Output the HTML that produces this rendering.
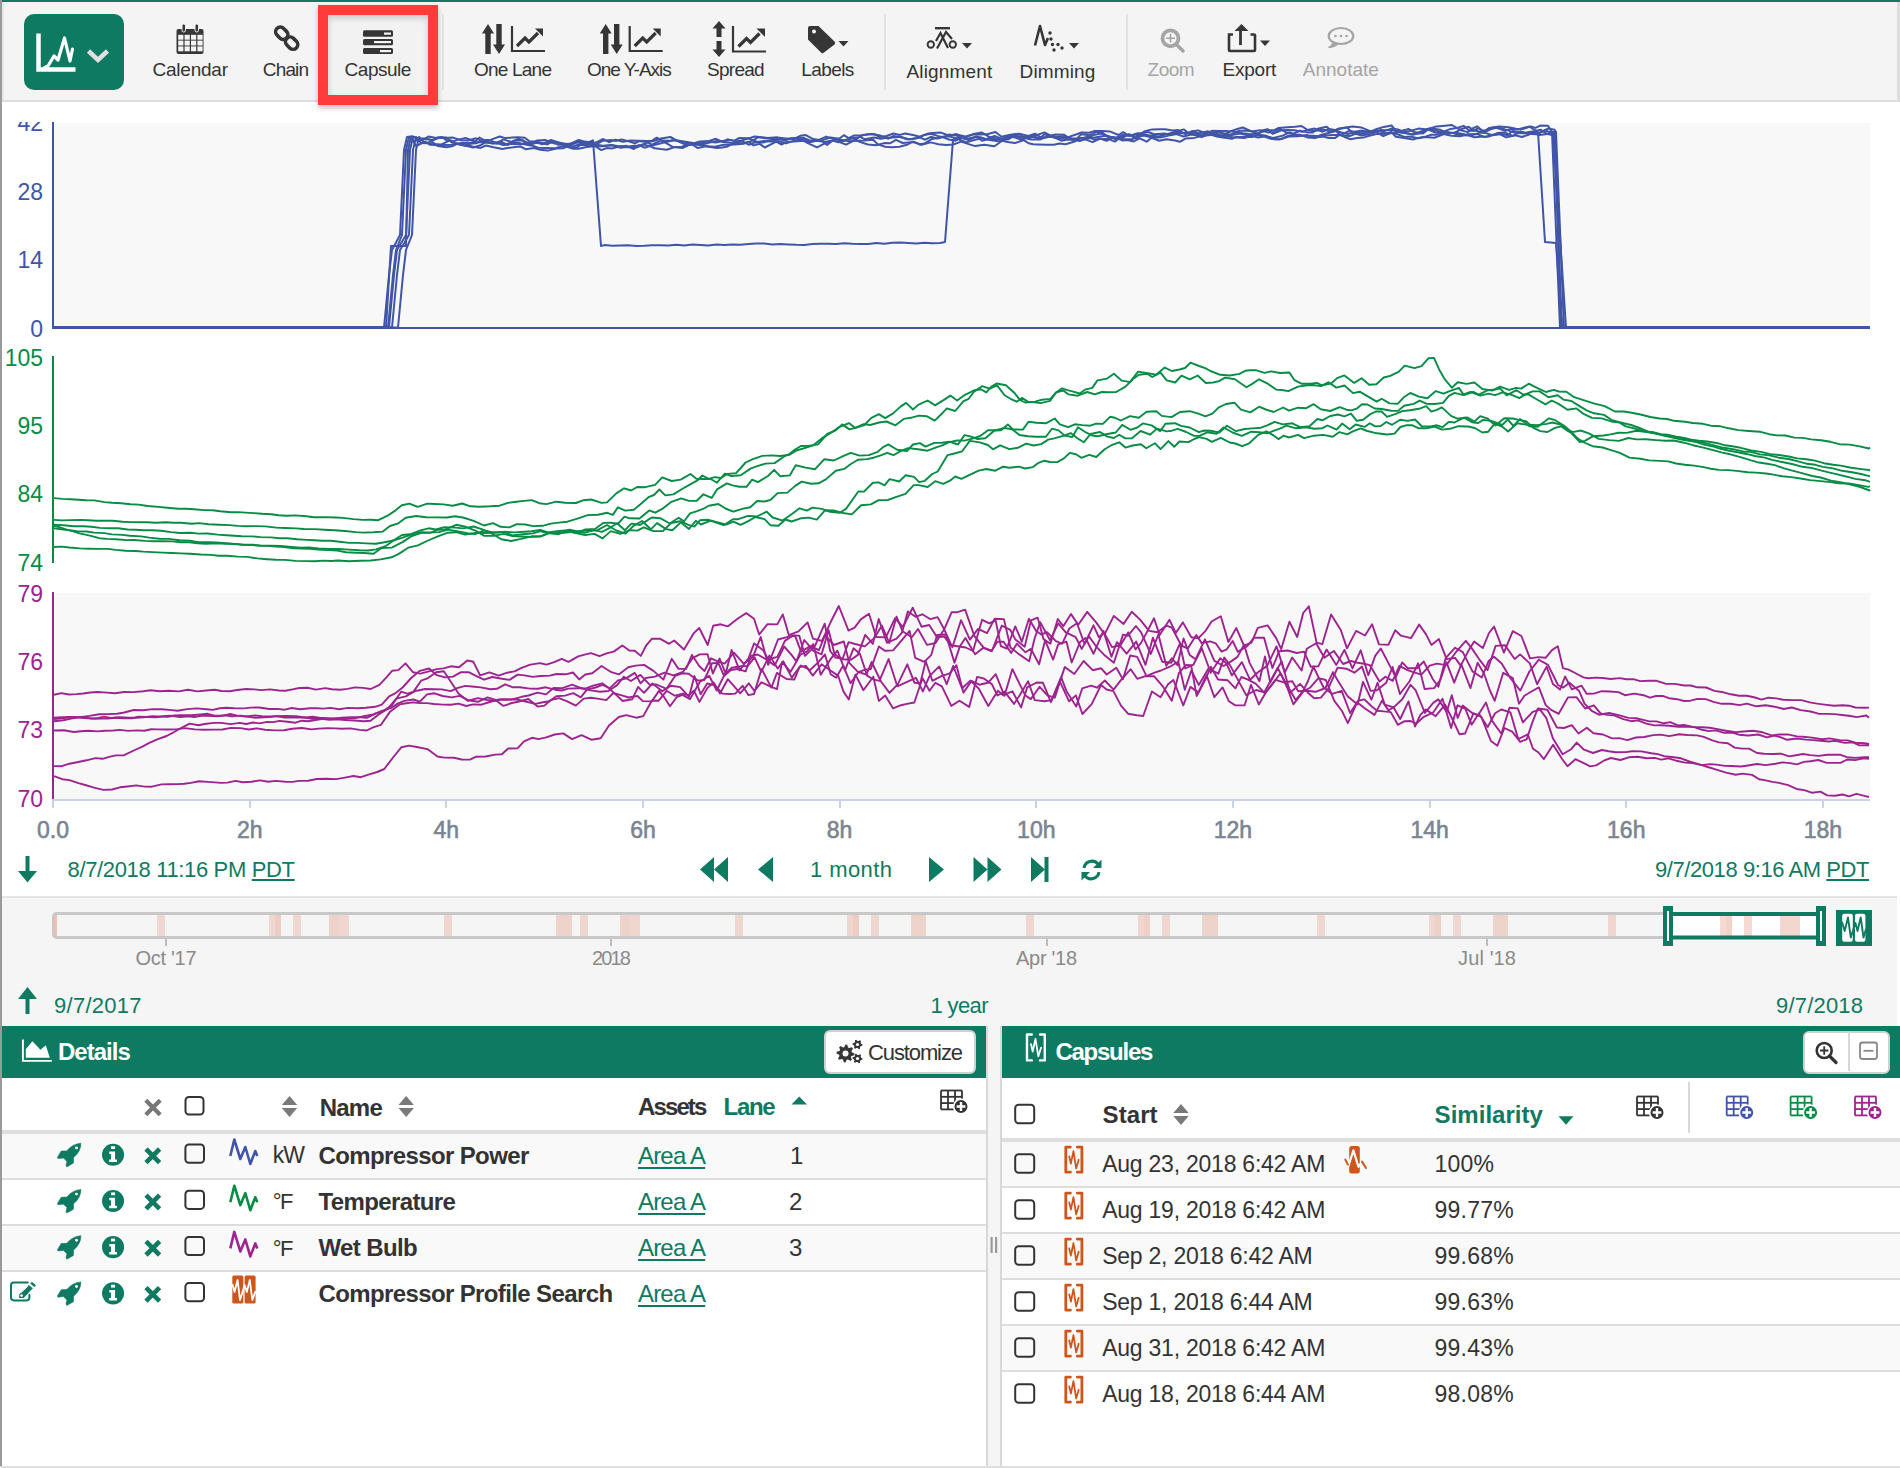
<!DOCTYPE html><html><head><meta charset="utf-8"><style>

*{margin:0;padding:0;box-sizing:content-box}
html,body{width:1900px;height:1468px;overflow:hidden;background:#fff}
body{position:relative;font-family:"Liberation Sans",sans-serif}
.t{position:absolute;white-space:nowrap;z-index:4}
.r{position:absolute}
svg.ov{position:absolute;left:0;top:0;z-index:2}

</style></head><body>
<div class="r" style="left:0px;top:0px;width:1900px;height:1468px;background:#ffffff;"></div>
<div class="r" style="left:0px;top:2px;width:1900px;height:98px;background:#f4f4f4;"></div>
<div class="r" style="left:0px;top:100px;width:1900px;height:2px;background:#dddddd;"></div>
<div class="r" style="left:0px;top:0px;width:1900px;height:2px;background:#0f7a62;"></div>
<div class="r" style="left:0px;top:0px;width:2px;height:1468px;background:#9a9a9a;"></div>
<div class="r" style="left:2px;top:2px;width:2px;height:98px;background:#e6e6e6;"></div>
<div class="r" style="left:1897px;top:2px;width:3px;height:98px;background:#dddddd;"></div>
<div class="r" style="left:24px;top:14px;width:100px;height:76px;background:#0f7a62;border-radius:10px;"></div>
<div class="r" style="left:328px;top:15px;width:100px;height:80px;background:#f2f2f2;box-shadow: inset 0 3px 6px rgba(0,0,0,0.18);"></div>
<div class="r" style="left:318px;top:5px;width:100px;height:80px;border:10px solid #ff3b3b;box-shadow:0 3px 5px rgba(0,0,0,0.25);"></div>
<div class="r" style="left:442px;top:14px;width:2px;height:76px;background:#e2e2e2;"></div>
<div class="r" style="left:884px;top:14px;width:2px;height:76px;background:#e2e2e2;"></div>
<div class="r" style="left:1126px;top:14px;width:2px;height:76px;background:#e2e2e2;"></div>
<div class="r" style="left:54px;top:123px;width:1816px;height:204px;background:#f8f8f9;"></div>
<div class="r" style="left:54px;top:593px;width:1816px;height:206px;background:#f8f8f9;"></div>
<div class="r" style="left:52px;top:122px;width:2px;height:207px;background:#4055a8;"></div>
<div class="r" style="left:52px;top:327px;width:1818px;height:2px;background:#4055a8;"></div>
<div class="r" style="left:52px;top:356px;width:2px;height:207px;background:#068c45;"></div>
<div class="r" style="left:52px;top:592px;width:2px;height:208px;background:#9d248f;"></div>
<div class="r" style="left:52px;top:799px;width:1818px;height:2px;background:#c9d2e8;"></div>
<div class="r" style="left:52px;top:800px;width:2px;height:8px;background:#c9d2e8;"></div>
<div class="r" style="left:249px;top:800px;width:2px;height:8px;background:#c9d2e8;"></div>
<div class="r" style="left:445px;top:800px;width:2px;height:8px;background:#c9d2e8;"></div>
<div class="r" style="left:642px;top:800px;width:2px;height:8px;background:#c9d2e8;"></div>
<div class="r" style="left:839px;top:800px;width:2px;height:8px;background:#c9d2e8;"></div>
<div class="r" style="left:1035px;top:800px;width:2px;height:8px;background:#c9d2e8;"></div>
<div class="r" style="left:1232px;top:800px;width:2px;height:8px;background:#c9d2e8;"></div>
<div class="r" style="left:1429px;top:800px;width:2px;height:8px;background:#c9d2e8;"></div>
<div class="r" style="left:1625px;top:800px;width:2px;height:8px;background:#c9d2e8;"></div>
<div class="r" style="left:1822px;top:800px;width:2px;height:8px;background:#c9d2e8;"></div>
<div class="r" style="left:2px;top:896px;width:1895px;height:2px;background:#e4e4e4;"></div>
<div class="r" style="left:2px;top:898px;width:1895px;height:128px;background:#f5f5f5;"></div>
<div class="r" style="left:52px;top:912px;width:1620px;height:21px;border:3px solid #c8c8c8;border-right:none;border-radius:5px 0 0 5px;background:#f5f5f5"></div>
<div class="r" style="left:1668px;top:912px;width:152px;height:27px;background:#ffffff;"></div>
<div class="r" style="left:165px;top:939px;width:2px;height:7px;background:#bdbdbd;"></div>
<div class="r" style="left:610px;top:939px;width:2px;height:7px;background:#bdbdbd;"></div>
<div class="r" style="left:1046px;top:939px;width:2px;height:7px;background:#bdbdbd;"></div>
<div class="r" style="left:1486px;top:939px;width:2px;height:7px;background:#bdbdbd;"></div>
<div class="r" style="left:2px;top:1026px;width:984px;height:52px;background:#0f7a62;"></div>
<div class="r" style="left:1002px;top:1026px;width:898px;height:52px;background:#0f7a62;"></div>
<div class="r" style="left:986px;top:1026px;width:2px;height:442px;background:#d8d8d8;"></div>
<div class="r" style="left:988px;top:1026px;width:12px;height:442px;background:#f5f5f5;"></div>
<div class="r" style="left:1000px;top:1026px;width:2px;height:442px;background:#d8d8d8;"></div>
<div class="r" style="left:2px;top:1078px;width:984px;height:387px;background:#ffffff;"></div>
<div class="r" style="left:1002px;top:1078px;width:898px;height:387px;background:#ffffff;"></div>
<div class="r" style="left:0px;top:1466px;width:1900px;height:2px;background:#e0e0e0;"></div>
<div class="r" style="left:824px;top:1030px;width:148px;height:40px;background:#fff;border:2px solid #d0d0d0;border-radius:6px"></div>
<div class="r" style="left:2px;top:1130px;width:984px;height:4px;background:#dddddd;"></div>
<div class="r" style="left:2px;top:1134px;width:984px;height:44px;background:#f9f9f9;"></div>
<div class="r" style="left:2px;top:1178px;width:984px;height:2px;background:#dddddd;"></div>
<div class="r" style="left:2px;top:1180px;width:984px;height:44px;background:#ffffff;"></div>
<div class="r" style="left:2px;top:1224px;width:984px;height:2px;background:#dddddd;"></div>
<div class="r" style="left:2px;top:1226px;width:984px;height:44px;background:#f9f9f9;"></div>
<div class="r" style="left:2px;top:1270px;width:984px;height:2px;background:#dddddd;"></div>
<div class="r" style="left:2px;top:1272px;width:984px;height:46px;background:#ffffff;"></div>
<div class="r" style="left:1803px;top:1030.5px;width:83px;height:39px;background:#fff;border:2px solid #d0d0d0;border-radius:6px"></div>
<div class="r" style="left:1848px;top:1032px;width:2px;height:39px;background:#d8d8d8;"></div>
<div class="r" style="left:1688px;top:1082px;width:2px;height:51px;background:#d8d8d8;"></div>
<div class="r" style="left:1002px;top:1138px;width:898px;height:4px;background:#dddddd;"></div>
<div class="r" style="left:1002px;top:1142px;width:898px;height:44px;background:#f9f9f9;"></div>
<div class="r" style="left:1002px;top:1186px;width:898px;height:2px;background:#dddddd;"></div>
<div class="r" style="left:1002px;top:1188px;width:898px;height:44px;background:#ffffff;"></div>
<div class="r" style="left:1002px;top:1232px;width:898px;height:2px;background:#dddddd;"></div>
<div class="r" style="left:1002px;top:1234px;width:898px;height:44px;background:#f9f9f9;"></div>
<div class="r" style="left:1002px;top:1278px;width:898px;height:2px;background:#dddddd;"></div>
<div class="r" style="left:1002px;top:1280px;width:898px;height:44px;background:#ffffff;"></div>
<div class="r" style="left:1002px;top:1324px;width:898px;height:2px;background:#dddddd;"></div>
<div class="r" style="left:1002px;top:1326px;width:898px;height:44px;background:#f9f9f9;"></div>
<div class="r" style="left:1002px;top:1370px;width:898px;height:2px;background:#dddddd;"></div>
<div class="r" style="left:1002px;top:1372px;width:898px;height:44px;background:#ffffff;"></div>
<svg class="ov" width="1900" height="1468" viewBox="0 0 1900 1468">
<path d="M38.5 33.5 V69.5 H75.5" fill="none" stroke="#fff" stroke-width="4.5"/>
<path d="M44 68 L48 66 L54 56 L58 60 L64.5 38 L70 61 L72.5 49" fill="none" stroke="#fff" stroke-width="3.2" stroke-linejoin="round" stroke-linecap="round"/>
<path d="M88.5 51 L98 60 L107.5 51" fill="none" stroke="#e0e0e0" stroke-width="4.5"/>
<rect x="176.5" y="29" width="27" height="25" rx="2" fill="#363636"/>
<rect x="182" y="24" width="3.5" height="8" rx="1.7" fill="#363636" stroke="#f4f4f4" stroke-width="1"/>
<rect x="195" y="24" width="3.5" height="8" rx="1.7" fill="#363636" stroke="#f4f4f4" stroke-width="1"/>
<rect x="178.2" y="34.8" width="5.2" height="4.9" fill="#f4f4f4"/>
<rect x="184.6" y="34.8" width="5.2" height="4.9" fill="#f4f4f4"/>
<rect x="191" y="34.8" width="5.2" height="4.9" fill="#f4f4f4"/>
<rect x="197.4" y="34.8" width="5.2" height="4.9" fill="#f4f4f4"/>
<rect x="178.2" y="40.6" width="5.2" height="4.9" fill="#f4f4f4"/>
<rect x="184.6" y="40.6" width="5.2" height="4.9" fill="#f4f4f4"/>
<rect x="191" y="40.6" width="5.2" height="4.9" fill="#f4f4f4"/>
<rect x="197.4" y="40.6" width="5.2" height="4.9" fill="#f4f4f4"/>
<rect x="178.2" y="46.4" width="5.2" height="4.9" fill="#f4f4f4"/>
<rect x="184.6" y="46.4" width="5.2" height="4.9" fill="#f4f4f4"/>
<rect x="191" y="46.4" width="5.2" height="4.9" fill="#f4f4f4"/>
<rect x="197.4" y="46.4" width="5.2" height="4.9" fill="#f4f4f4"/>
<g transform="rotate(-45 286.5 38)"><rect x="281.8" y="24.5" width="9.4" height="13.5" rx="4.7" fill="none" stroke="#363636" stroke-width="3.6"/><rect x="281.8" y="38.5" width="9.4" height="13.5" rx="4.7" fill="none" stroke="#363636" stroke-width="3.6"/></g>
<rect x="363" y="30.3" width="30" height="6.5" rx="1.5" fill="#363636"/><rect x="384" y="32.5" width="7" height="2.2" fill="#f4f4f4"/>
<rect x="363" y="39" width="30" height="6.2" rx="1.5" fill="#363636"/><rect x="374" y="41" width="17" height="2.2" fill="#f4f4f4"/>
<rect x="363" y="48" width="30" height="6" rx="1.5" fill="#363636"/><rect x="380" y="50" width="11" height="2.2" fill="#f4f4f4"/>
<path d="M482 33.5 L488 24 L494 33.5 H490.7 V54 H485.3 V33.5 Z" fill="#363636"/>
<path d="M493 44.5 L499 54 L505 44.5 H501.7 V24 H496.3 V44.5 Z" fill="#363636"/>
<path d="M512 26 V51 H545" fill="none" stroke="#363636" stroke-width="2.2"/>
<path d="M517 46 L525 38 L529 42 L538 33" fill="none" stroke="#363636" stroke-width="3.2"/>
<path d="M535 28.5 H543 V36.5 Z" fill="#363636"/>
<path d="M599.7 33.5 L605.7 24 L611.7 33.5 H608.4 V54 H603.0 V33.5 Z" fill="#363636"/>
<path d="M610.7 44.5 L616.7 54 L622.7 44.5 H619.4 V24 H614.0 V44.5 Z" fill="#363636"/>
<path d="M629.7 26 V51 H662.7" fill="none" stroke="#363636" stroke-width="2.2"/>
<path d="M634.7 46 L642.7 38 L646.7 42 L655.7 33" fill="none" stroke="#363636" stroke-width="3.2"/>
<path d="M652.7 28.5 H660.7 V36.5 Z" fill="#363636"/>
<path d="M712.5 28.5 L719 21 L725.5 28.5 H721.5 V37 H716.5 V28.5 Z" fill="#363636"/>
<path d="M712.5 49.5 L719 57 L725.5 49.5 H721.5 V41 H716.5 V49.5 Z" fill="#363636"/>
<path d="M733 26 V51.5 H766" fill="none" stroke="#363636" stroke-width="2.2"/>
<path d="M738.5 46.5 L746.5 38.5 L750.5 42.5 L759.5 33.5" fill="none" stroke="#363636" stroke-width="3.2"/>
<path d="M756.5 28.5 H765 V37 Z" fill="#363636"/>
<path d="M810 26 H818.5 L834.5 41.5 Q836 43 834.5 44.5 L824 52.5 Q822.5 54 821 52.5 L808 39.5 V28 Q808 26 810 26 Z" fill="#363636"/>
<circle cx="814" cy="31.5" r="2" fill="#f4f4f4"/>
<path d="M838.5 41 H848.5 L843.5 46.5 Z" fill="#363636"/>
<rect x="935" y="27" width="15" height="2.4" fill="#363636"/>
<circle cx="930.8" cy="44.5" r="3.2" fill="none" stroke="#363636" stroke-width="1.9"/>
<circle cx="952.8" cy="44.5" r="3.2" fill="none" stroke="#363636" stroke-width="1.9"/>
<path d="M936 41 L940.5 33 L948 48" fill="none" stroke="#363636" stroke-width="2.2"/>
<path d="M937 48.5 L946 32 L952 39" fill="none" stroke="#363636" stroke-width="2.2"/>
<path d="M962 43 H972 L967 48.5 Z" fill="#363636"/>
<path d="M1035 45.5 L1040 26 L1045 45 L1048 38" fill="none" stroke="#363636" stroke-width="2.6" stroke-linejoin="round"/>
<circle cx="1050" cy="33" r="1.7" fill="#363636"/>
<circle cx="1051" cy="39" r="1.7" fill="#363636"/>
<circle cx="1052.5" cy="44.5" r="1.7" fill="#363636"/>
<circle cx="1058" cy="44.5" r="1.7" fill="#363636"/>
<circle cx="1054" cy="50" r="1.7" fill="#363636"/>
<circle cx="1062" cy="48" r="1.7" fill="#363636"/>
<path d="M1069 43 H1079 L1074 48.5 Z" fill="#363636"/>
<circle cx="1170.5" cy="38.3" r="8" fill="none" stroke="#a5a5a5" stroke-width="3.8"/>
<path d="M1176.5 44.5 L1183 51" stroke="#a5a5a5" stroke-width="3.5" stroke-linecap="round"/>
<path d="M1166 38.3 H1175 M1170.5 34 V42.5" stroke="#a5a5a5" stroke-width="1.6"/>
<path d="M1233 34.5 H1229 Q1229 34.5 1229 35 V50 Q1229 51 1230 51 H1254 Q1255 51 1255 50 V35 Q1255 34.5 1254 34.5 H1250.5" fill="none" stroke="#363636" stroke-width="2.6"/>
<path d="M1240.5 45 V30.5" stroke="#363636" stroke-width="2.8"/>
<path d="M1234.5 31 L1241.5 24 L1248.5 31 Z" fill="#363636"/>
<path d="M1260 40.5 H1270 L1265 46 Z" fill="#363636"/>
<ellipse cx="1341" cy="36" rx="12.3" ry="8" fill="none" stroke="#a5a5a5" stroke-width="2.2"/>
<path d="M1333 42 Q1332.5 46 1328.5 47.5 Q1335 47 1338 43.5" fill="#a5a5a5" stroke="#a5a5a5" stroke-width="1.5"/>
<circle cx="1335.5" cy="36" r="1.3" fill="#a5a5a5"/>
<circle cx="1341" cy="36" r="1.3" fill="#a5a5a5"/>
<circle cx="1346.5" cy="36" r="1.3" fill="#a5a5a5"/>
<path d="M27.5 856 V873" stroke="#0f7a62" stroke-width="4"/><path d="M18 871 L27.5 882.5 L37 871 Z" fill="#0f7a62"/>
<path d="M714 857 L700 869.5 L714 882 Z M728 857 L714 869.5 L728 882 Z" fill="#0f7a62"/>
<path d="M773 857 L758 869.5 L773 882 Z" fill="#0f7a62"/>
<path d="M929 857 L944 869.5 L929 882 Z" fill="#0f7a62"/>
<path d="M973.5 857 L987.5 869.5 L973.5 882 Z M987.5 857 L1001.5 869.5 L987.5 882 Z" fill="#0f7a62"/>
<path d="M1031 857 L1045 869.5 L1031 882 Z" fill="#0f7a62"/><rect x="1044.5" y="857" width="4" height="25" fill="#0f7a62"/>
<path d="M1084 868 A8 8 0 0 1 1098 864" fill="none" stroke="#0f7a62" stroke-width="3"/><path d="M1101.5 859.5 V868 H1093 Z" fill="#0f7a62"/>
<path d="M1099 872 A8 8 0 0 1 1085 876" fill="none" stroke="#0f7a62" stroke-width="3"/><path d="M1081.5 880.5 V872 H1090 Z" fill="#0f7a62"/>
<rect x="53" y="915" width="4" height="21" fill="#e9bcae" opacity="0.9"/>
<rect x="157" y="915" width="8" height="21" fill="#e9bcae" opacity="0.55"/>
<rect x="269" y="915" width="6" height="21" fill="#e9bcae" opacity="0.55"/>
<rect x="275" y="915" width="6" height="21" fill="#e9bcae" opacity="0.7"/>
<rect x="293" y="915" width="8" height="21" fill="#e9bcae" opacity="0.55"/>
<rect x="329" y="915" width="10" height="21" fill="#e9bcae" opacity="0.6"/>
<rect x="339" y="915" width="10" height="21" fill="#e9bcae" opacity="0.55"/>
<rect x="444" y="915" width="8" height="21" fill="#e9bcae" opacity="0.55"/>
<rect x="556" y="915" width="16" height="21" fill="#e9bcae" opacity="0.6"/>
<rect x="580" y="915" width="8" height="21" fill="#e9bcae" opacity="0.55"/>
<rect x="620" y="915" width="10" height="21" fill="#e9bcae" opacity="0.6"/>
<rect x="630" y="915" width="10" height="21" fill="#e9bcae" opacity="0.55"/>
<rect x="735" y="915" width="8" height="21" fill="#e9bcae" opacity="0.55"/>
<rect x="847" y="915" width="6" height="21" fill="#e9bcae" opacity="0.55"/>
<rect x="853" y="915" width="6" height="21" fill="#e9bcae" opacity="0.7"/>
<rect x="871" y="915" width="8" height="21" fill="#e9bcae" opacity="0.55"/>
<rect x="911" y="915" width="7" height="21" fill="#e9bcae" opacity="0.6"/>
<rect x="918" y="915" width="8" height="21" fill="#e9bcae" opacity="0.6"/>
<rect x="1026" y="915" width="8" height="21" fill="#e9bcae" opacity="0.55"/>
<rect x="1138" y="915" width="6" height="21" fill="#e9bcae" opacity="0.55"/>
<rect x="1144" y="915" width="6" height="21" fill="#e9bcae" opacity="0.65"/>
<rect x="1162" y="915" width="8" height="21" fill="#e9bcae" opacity="0.55"/>
<rect x="1202" y="915" width="8" height="21" fill="#e9bcae" opacity="0.6"/>
<rect x="1210" y="915" width="8" height="21" fill="#e9bcae" opacity="0.6"/>
<rect x="1317" y="915" width="8" height="21" fill="#e9bcae" opacity="0.55"/>
<rect x="1429" y="915" width="6" height="21" fill="#e9bcae" opacity="0.55"/>
<rect x="1435" y="915" width="6" height="21" fill="#e9bcae" opacity="0.65"/>
<rect x="1453" y="915" width="8" height="21" fill="#e9bcae" opacity="0.55"/>
<rect x="1493" y="915" width="7" height="21" fill="#e9bcae" opacity="0.6"/>
<rect x="1500" y="915" width="8" height="21" fill="#e9bcae" opacity="0.6"/>
<rect x="1608" y="915" width="8" height="21" fill="#e9bcae" opacity="0.55"/>
<rect x="1720" y="916" width="6" height="20" fill="#e9bcae" opacity="0.55"/>
<rect x="1726" y="916" width="6" height="20" fill="#e9bcae" opacity="0.65"/>
<rect x="1744" y="916" width="8" height="20" fill="#e9bcae" opacity="0.55"/>
<rect x="1780" y="916" width="10" height="20" fill="#e9bcae" opacity="0.6"/>
<rect x="1790" y="916" width="10" height="20" fill="#e9bcae" opacity="0.6"/>
<rect x="1668" y="914" width="152" height="23.5" fill="none" stroke="#0f7a62" stroke-width="4"/>
<rect x="1663" y="906" width="10" height="40" fill="#0f7a62"/><rect x="1667" y="911" width="2" height="30" fill="#fff"/>
<rect x="1816" y="906" width="10" height="40" fill="#0f7a62"/><rect x="1820" y="911" width="2" height="30" fill="#fff"/>
<rect x="1836" y="910" width="36" height="36" fill="#0f7a62"/>
<rect x="1842.2" y="913.8" width="10.6" height="28" rx="2" fill="#fff"/><rect x="1855" y="913.8" width="10.4" height="28" rx="2" fill="#fff"/>
<path d="M1842 922 L1844.7 931 L1848 917.5 L1850.8 937.5 L1853.5 929 L1855.5 923 L1857.5 931 L1860.7 917.5 L1863.5 937.5 L1866 929" fill="none" stroke="#0f7a62" stroke-width="1.9" stroke-linejoin="round"/>
<path d="M27.5 1014 V997" stroke="#0f7a62" stroke-width="4"/><path d="M18 999 L27.5 987 L37 999 Z" fill="#0f7a62"/>
<rect x="990.5" y="1237" width="2.2" height="16" fill="#9a9a9a"/><rect x="995" y="1237" width="2.2" height="16" fill="#9a9a9a"/>
<path d="M22.9 1039.4 V1060.9 H51.8" fill="none" stroke="#fff" stroke-width="1.9"/>
<path d="M25.8 1057.7 V1049.2 L32.4 1041.3 L40.5 1049.7 L45.8 1045.2 L49.8 1057.7 Z" fill="#fff"/>
<path d="M854.50 1053.50 L854.33 1055.26 L851.49 1055.98 L850.89 1057.10 L851.86 1059.86 L850.50 1060.98 L847.98 1059.49 L846.76 1059.86 L845.50 1062.50 L843.74 1062.33 L843.02 1059.49 L841.90 1058.89 L839.14 1059.86 L838.02 1058.50 L839.51 1055.98 L839.14 1054.76 L836.50 1053.50 L836.67 1051.74 L839.51 1051.02 L840.11 1049.90 L839.14 1047.14 L840.50 1046.02 L843.02 1047.51 L844.24 1047.14 L845.50 1044.50 L847.26 1044.67 L847.98 1047.51 L849.10 1048.11 L851.86 1047.14 L852.98 1048.50 L851.49 1051.02 L851.86 1052.24 Z" fill="#363636"/><circle cx="845.5" cy="1053.5" r="3" fill="#fff"/>
<path d="M862.50 1044.50 L862.33 1045.79 L860.62 1046.30 L860.05 1047.05 L860.00 1048.83 L858.79 1049.33 L857.50 1048.10 L856.57 1047.98 L855.00 1048.83 L853.96 1048.04 L854.38 1046.30 L854.02 1045.43 L852.50 1044.50 L852.67 1043.21 L854.38 1042.70 L854.95 1041.95 L855.00 1040.17 L856.21 1039.67 L857.50 1040.90 L858.43 1041.02 L860.00 1040.17 L861.04 1040.96 L860.62 1042.70 L860.98 1043.57 Z" fill="#363636"/><circle cx="857.5" cy="1044.5" r="1.6" fill="#fff"/>
<path d="M862.50 1058.50 L862.33 1059.79 L860.62 1060.30 L860.05 1061.05 L860.00 1062.83 L858.79 1063.33 L857.50 1062.10 L856.57 1061.98 L855.00 1062.83 L853.96 1062.04 L854.38 1060.30 L854.02 1059.43 L852.50 1058.50 L852.67 1057.21 L854.38 1056.70 L854.95 1055.95 L855.00 1054.17 L856.21 1053.67 L857.50 1054.90 L858.43 1055.02 L860.00 1054.17 L861.04 1054.96 L860.62 1056.70 L860.98 1057.57 Z" fill="#363636"/><circle cx="857.5" cy="1058.5" r="1.6" fill="#fff"/>
<path d="M145.8 1100.3 L160.2 1114.7 M160.2 1100.3 L145.8 1114.7" stroke="#777777" stroke-width="4.2" stroke-linecap="butt"/>
<rect x="185.5" y="1097" width="18" height="17.5" rx="3.5" fill="none" stroke="#333" stroke-width="2"/>
<path d="M281.8 1105 L289.5 1096 L297.2 1105 Z M281.8 1108 L289.5 1117 L297.2 1108 Z" fill="#7a7a7a"/>
<path d="M398.5 1105 L406.2 1096 L413.9 1105 Z M398.5 1108 L406.2 1117 L413.9 1108 Z" fill="#7a7a7a"/>
<path d="M791.5 1104.5 L799.2 1096.5 L807 1104.5 Z" fill="#0f7a62"/>
<path d="M941 1090.5 H962" stroke="#333333" stroke-width="1.8"/><path d="M941 1096.8 H962" stroke="#333333" stroke-width="1.8"/><path d="M941 1103.1 H962" stroke="#333333" stroke-width="1.8"/><path d="M941 1109.4 H962" stroke="#333333" stroke-width="1.8"/><path d="M941 1090.5 V1109.5" stroke="#333333" stroke-width="1.8"/><path d="M948 1090.5 V1109.5" stroke="#333333" stroke-width="1.8"/><path d="M955 1090.5 V1109.5" stroke="#333333" stroke-width="1.8"/><path d="M962 1090.5 V1109.5" stroke="#333333" stroke-width="1.8"/>
<circle cx="961" cy="1106.5" r="7.3" fill="#333333" stroke="#fff" stroke-width="1.6"/>
<path d="M961 1102.1 V1110.9 M956.6 1106.5 H965.4" stroke="#fff" stroke-width="2.4"/>
<g transform="translate(50.0 1137.8)"><path d="M30.9 5.5 Q31 13.5 23.6 19.8 L23.4 25.3 L16.8 29.1 L16 27.4 L17 23.6 L13.5 20.2 L8 20.8 L7.4 19.6 L11.2 13.3 L16.8 13.1 Q22.5 6 30.9 5.5 Z" fill="#0f7a62" stroke="#0f7a62" stroke-width="0.6" stroke-linejoin="round"/><circle cx="26.5" cy="10.1" r="1.45" fill="#fff"/></g>
<circle cx="113.05" cy="1154.75" r="11.05" fill="#0f7a62"/>
<rect x="111.05" y="1146.2" width="4" height="2.8" fill="#ffffff"/>
<path d="M109.3 1151.5 H115.05 V1159.5 H116.89999999999999 V1162.0 H109.2 V1159.5 H111.05 V1154.0 H109.3 Z" fill="#ffffff"/>
<path d="M146.0 1149.0 L159.60000000000002 1162.6 M159.60000000000002 1149.0 L146.0 1162.6" stroke="#0f7a62" stroke-width="4.6" stroke-linecap="butt"/>
<rect x="185.4" y="1144.5" width="18.6" height="18.2" rx="3.5" fill="none" stroke="#333" stroke-width="2"/>
<path d="M230.3 1156.0 L234.3 1139.5 L240.3 1159.0 L245.3 1147.0 L250.3 1164.0 L255.3 1151.0 L257.3 1156.0" fill="none" stroke="#4055a8" stroke-width="2.6" stroke-linejoin="round"/>
<g transform="translate(50.0 1184.0)"><path d="M30.9 5.5 Q31 13.5 23.6 19.8 L23.4 25.3 L16.8 29.1 L16 27.4 L17 23.6 L13.5 20.2 L8 20.8 L7.4 19.6 L11.2 13.3 L16.8 13.1 Q22.5 6 30.9 5.5 Z" fill="#0f7a62" stroke="#0f7a62" stroke-width="0.6" stroke-linejoin="round"/><circle cx="26.5" cy="10.1" r="1.45" fill="#fff"/></g>
<circle cx="113.05" cy="1200.95" r="11.05" fill="#0f7a62"/>
<rect x="111.05" y="1192.4" width="4" height="2.8" fill="#ffffff"/>
<path d="M109.3 1197.7 H115.05 V1205.7 H116.89999999999999 V1208.2 H109.2 V1205.7 H111.05 V1200.2 H109.3 Z" fill="#ffffff"/>
<path d="M146.0 1195.2 L159.60000000000002 1208.8 M159.60000000000002 1195.2 L146.0 1208.8" stroke="#0f7a62" stroke-width="4.6" stroke-linecap="butt"/>
<rect x="185.4" y="1190.7" width="18.6" height="18.2" rx="3.5" fill="none" stroke="#333" stroke-width="2"/>
<path d="M230.3 1202.2 L234.3 1185.7 L240.3 1205.2 L245.3 1193.2 L250.3 1210.2 L255.3 1197.2 L257.3 1202.2" fill="none" stroke="#068c45" stroke-width="2.6" stroke-linejoin="round"/>
<g transform="translate(50.0 1230.2)"><path d="M30.9 5.5 Q31 13.5 23.6 19.8 L23.4 25.3 L16.8 29.1 L16 27.4 L17 23.6 L13.5 20.2 L8 20.8 L7.4 19.6 L11.2 13.3 L16.8 13.1 Q22.5 6 30.9 5.5 Z" fill="#0f7a62" stroke="#0f7a62" stroke-width="0.6" stroke-linejoin="round"/><circle cx="26.5" cy="10.1" r="1.45" fill="#fff"/></g>
<circle cx="113.05" cy="1247.15" r="11.05" fill="#0f7a62"/>
<rect x="111.05" y="1238.6000000000001" width="4" height="2.8" fill="#ffffff"/>
<path d="M109.3 1243.9 H115.05 V1251.9 H116.89999999999999 V1254.4 H109.2 V1251.9 H111.05 V1246.4 H109.3 Z" fill="#ffffff"/>
<path d="M146.0 1241.4 L159.60000000000002 1255.0 M159.60000000000002 1241.4 L146.0 1255.0" stroke="#0f7a62" stroke-width="4.6" stroke-linecap="butt"/>
<rect x="185.4" y="1236.9" width="18.6" height="18.2" rx="3.5" fill="none" stroke="#333" stroke-width="2"/>
<path d="M230.3 1248.4 L234.3 1231.9 L240.3 1251.4 L245.3 1239.4 L250.3 1256.4 L255.3 1243.4 L257.3 1248.4" fill="none" stroke="#9d248f" stroke-width="2.6" stroke-linejoin="round"/>
<g transform="translate(50.0 1276.4)"><path d="M30.9 5.5 Q31 13.5 23.6 19.8 L23.4 25.3 L16.8 29.1 L16 27.4 L17 23.6 L13.5 20.2 L8 20.8 L7.4 19.6 L11.2 13.3 L16.8 13.1 Q22.5 6 30.9 5.5 Z" fill="#0f7a62" stroke="#0f7a62" stroke-width="0.6" stroke-linejoin="round"/><circle cx="26.5" cy="10.1" r="1.45" fill="#fff"/></g>
<circle cx="113.05" cy="1293.3500000000001" r="11.05" fill="#0f7a62"/>
<rect x="111.05" y="1284.8000000000002" width="4" height="2.8" fill="#ffffff"/>
<path d="M109.3 1290.1000000000001 H115.05 V1298.1000000000001 H116.89999999999999 V1300.6000000000001 H109.2 V1298.1000000000001 H111.05 V1292.6000000000001 H109.3 Z" fill="#ffffff"/>
<path d="M146.0 1287.6000000000001 L159.60000000000002 1301.2 M159.60000000000002 1287.6000000000001 L146.0 1301.2" stroke="#0f7a62" stroke-width="4.6" stroke-linecap="butt"/>
<rect x="185.4" y="1283.1000000000001" width="18.6" height="18.2" rx="3.5" fill="none" stroke="#333" stroke-width="2"/>
<path d="M27.8 1282.4 H13.8 Q11 1282.4 11 1285.2 V1297.6 Q11 1300.4 13.8 1300.4 H26.6 Q29.4 1300.4 29.4 1297.6 V1294.8" fill="none" stroke="#0f7a62" stroke-width="2" stroke-linecap="round"/>
<path d="M19.1 1297.9 L19.3 1294.3 L28.8 1285 L32.9 1288.3 L23.6 1297.9 Z" fill="#0f7a62"/><path d="M30 1283.3 L32.2 1281.9 L36 1285.2 L34.3 1286.9 Z" fill="#0f7a62"/>
<path d="M21.2 1292.5 L27.8 1286.3" stroke="#fff" stroke-width="0.9"/><circle cx="21.6" cy="1295.6" r="1.3" fill="#fff"/>
<rect x="232.3" y="1275.6" width="11" height="27.8" rx="1.5" fill="#ce561b"/><rect x="244.6" y="1275.6" width="11" height="27.8" rx="1.5" fill="#ce561b"/>
<path d="M232.3 1284 L234.5 1292 L237.6 1280 L240 1300 L242.5 1292 L244.6 1285 L246.8 1292 L249.8 1280 L252.3 1300 L255.6 1291" fill="none" stroke="#fff" stroke-width="1.8" stroke-linejoin="round"/>
<path d="M1031.8 1034.5 H1027.0 V1060.3999999999999 H1031.8 M1040.0 1034.5 H1044.8 V1060.3999999999999 H1040.0" fill="none" stroke="#ffffff" stroke-width="2.4" stroke-linejoin="round" stroke-linecap="round"/>
<path d="M1031.01 1044.22 L1032.71 1051.49 L1035.47 1038.86 L1038.35 1056.34 L1041.11 1047.55" fill="none" stroke="#ffffff" stroke-width="1.8" stroke-linejoin="round" stroke-linecap="round"/>
<circle cx="1824.2" cy="1050.5" r="7.5" fill="none" stroke="#333" stroke-width="2.6"/><path d="M1829.5 1056 L1836 1062.5" stroke="#333" stroke-width="3.2" stroke-linecap="round"/><path d="M1820 1050.5 H1828.4 M1824.2 1046.3 V1054.7" stroke="#333" stroke-width="1.8"/>
<rect x="1860" y="1042.5" width="17" height="16.5" rx="2.5" fill="none" stroke="#888" stroke-width="1.8"/><path d="M1863.5 1050.8 H1873.5" stroke="#888" stroke-width="1.8"/>
<rect x="1015.2" y="1104.8" width="19" height="18.5" rx="3.5" fill="none" stroke="#333" stroke-width="2"/>
<path d="M1173.3 1113 L1181.0 1104 L1188.7 1113 Z M1173.3 1116 L1181.0 1125 L1188.7 1116 Z" fill="#7a7a7a"/>
<path d="M1558.5 1116.3 L1566 1124.8 L1573.5 1116.3 Z" fill="#0f7a62"/>
<path d="M1637 1096.5 H1658" stroke="#333333" stroke-width="1.8"/><path d="M1637 1102.8 H1658" stroke="#333333" stroke-width="1.8"/><path d="M1637 1109.1 H1658" stroke="#333333" stroke-width="1.8"/><path d="M1637 1115.4 H1658" stroke="#333333" stroke-width="1.8"/><path d="M1637 1096.5 V1115.5" stroke="#333333" stroke-width="1.8"/><path d="M1644 1096.5 V1115.5" stroke="#333333" stroke-width="1.8"/><path d="M1651 1096.5 V1115.5" stroke="#333333" stroke-width="1.8"/><path d="M1658 1096.5 V1115.5" stroke="#333333" stroke-width="1.8"/>
<circle cx="1657" cy="1112.5" r="7.3" fill="#333333" stroke="#fff" stroke-width="1.6"/>
<path d="M1657 1108.1 V1116.9 M1652.6 1112.5 H1661.4" stroke="#fff" stroke-width="2.4"/>
<path d="M1726.7 1096.5 H1747.7" stroke="#4055a8" stroke-width="1.8"/><path d="M1726.7 1102.8 H1747.7" stroke="#4055a8" stroke-width="1.8"/><path d="M1726.7 1109.1 H1747.7" stroke="#4055a8" stroke-width="1.8"/><path d="M1726.7 1115.4 H1747.7" stroke="#4055a8" stroke-width="1.8"/><path d="M1726.7 1096.5 V1115.5" stroke="#4055a8" stroke-width="1.8"/><path d="M1733.7 1096.5 V1115.5" stroke="#4055a8" stroke-width="1.8"/><path d="M1740.7 1096.5 V1115.5" stroke="#4055a8" stroke-width="1.8"/><path d="M1747.7 1096.5 V1115.5" stroke="#4055a8" stroke-width="1.8"/>
<circle cx="1746.7" cy="1112.5" r="7.3" fill="#4055a8" stroke="#fff" stroke-width="1.6"/>
<path d="M1746.7 1108.1 V1116.9 M1742.3 1112.5 H1751.1000000000001" stroke="#fff" stroke-width="2.4"/>
<path d="M1790.6 1096.5 H1811.6" stroke="#068c45" stroke-width="1.8"/><path d="M1790.6 1102.8 H1811.6" stroke="#068c45" stroke-width="1.8"/><path d="M1790.6 1109.1 H1811.6" stroke="#068c45" stroke-width="1.8"/><path d="M1790.6 1115.4 H1811.6" stroke="#068c45" stroke-width="1.8"/><path d="M1790.6 1096.5 V1115.5" stroke="#068c45" stroke-width="1.8"/><path d="M1797.6 1096.5 V1115.5" stroke="#068c45" stroke-width="1.8"/><path d="M1804.6 1096.5 V1115.5" stroke="#068c45" stroke-width="1.8"/><path d="M1811.6 1096.5 V1115.5" stroke="#068c45" stroke-width="1.8"/>
<circle cx="1810.6" cy="1112.5" r="7.3" fill="#068c45" stroke="#fff" stroke-width="1.6"/>
<path d="M1810.6 1108.1 V1116.9 M1806.1999999999998 1112.5 H1815.0" stroke="#fff" stroke-width="2.4"/>
<path d="M1855 1096.5 H1876" stroke="#9d248f" stroke-width="1.8"/><path d="M1855 1102.8 H1876" stroke="#9d248f" stroke-width="1.8"/><path d="M1855 1109.1 H1876" stroke="#9d248f" stroke-width="1.8"/><path d="M1855 1115.4 H1876" stroke="#9d248f" stroke-width="1.8"/><path d="M1855 1096.5 V1115.5" stroke="#9d248f" stroke-width="1.8"/><path d="M1862 1096.5 V1115.5" stroke="#9d248f" stroke-width="1.8"/><path d="M1869 1096.5 V1115.5" stroke="#9d248f" stroke-width="1.8"/><path d="M1876 1096.5 V1115.5" stroke="#9d248f" stroke-width="1.8"/>
<circle cx="1875" cy="1112.5" r="7.3" fill="#9d248f" stroke="#fff" stroke-width="1.6"/>
<path d="M1875 1108.1 V1116.9 M1870.6 1112.5 H1879.4" stroke="#fff" stroke-width="2.4"/>
<rect x="1015.2" y="1154.2" width="19" height="18.5" rx="3.5" fill="none" stroke="#333" stroke-width="2"/>
<path d="M1070.4 1147.1000000000001 H1065.8000000000002 V1172.2 H1070.4 M1077.3000000000002 1147.1000000000001 H1081.9 V1172.2 H1077.3000000000002" fill="none" stroke="#ce561b" stroke-width="2.8" stroke-linejoin="round" stroke-linecap="round"/>
<path d="M1069.27 1156.46 L1070.87 1163.64 L1073.45 1151.18 L1076.14 1168.42 L1078.72 1159.75" fill="none" stroke="#ce561b" stroke-width="1.8" stroke-linejoin="round" stroke-linecap="round"/>
<rect x="1015.2" y="1200.2" width="19" height="18.5" rx="3.5" fill="none" stroke="#333" stroke-width="2"/>
<path d="M1070.4 1193.1000000000001 H1065.8000000000002 V1218.2 H1070.4 M1077.3000000000002 1193.1000000000001 H1081.9 V1218.2 H1077.3000000000002" fill="none" stroke="#ce561b" stroke-width="2.8" stroke-linejoin="round" stroke-linecap="round"/>
<path d="M1069.27 1202.46 L1070.87 1209.64 L1073.45 1197.18 L1076.14 1214.42 L1078.72 1205.75" fill="none" stroke="#ce561b" stroke-width="1.8" stroke-linejoin="round" stroke-linecap="round"/>
<rect x="1015.2" y="1246.2" width="19" height="18.5" rx="3.5" fill="none" stroke="#333" stroke-width="2"/>
<path d="M1070.4 1239.1000000000001 H1065.8000000000002 V1264.2 H1070.4 M1077.3000000000002 1239.1000000000001 H1081.9 V1264.2 H1077.3000000000002" fill="none" stroke="#ce561b" stroke-width="2.8" stroke-linejoin="round" stroke-linecap="round"/>
<path d="M1069.27 1248.46 L1070.87 1255.64 L1073.45 1243.18 L1076.14 1260.42 L1078.72 1251.75" fill="none" stroke="#ce561b" stroke-width="1.8" stroke-linejoin="round" stroke-linecap="round"/>
<rect x="1015.2" y="1292.2" width="19" height="18.5" rx="3.5" fill="none" stroke="#333" stroke-width="2"/>
<path d="M1070.4 1285.1000000000001 H1065.8000000000002 V1310.2 H1070.4 M1077.3000000000002 1285.1000000000001 H1081.9 V1310.2 H1077.3000000000002" fill="none" stroke="#ce561b" stroke-width="2.8" stroke-linejoin="round" stroke-linecap="round"/>
<path d="M1069.27 1294.46 L1070.87 1301.64 L1073.45 1289.18 L1076.14 1306.42 L1078.72 1297.75" fill="none" stroke="#ce561b" stroke-width="1.8" stroke-linejoin="round" stroke-linecap="round"/>
<rect x="1015.2" y="1338.2" width="19" height="18.5" rx="3.5" fill="none" stroke="#333" stroke-width="2"/>
<path d="M1070.4 1331.1000000000001 H1065.8000000000002 V1356.2 H1070.4 M1077.3000000000002 1331.1000000000001 H1081.9 V1356.2 H1077.3000000000002" fill="none" stroke="#ce561b" stroke-width="2.8" stroke-linejoin="round" stroke-linecap="round"/>
<path d="M1069.27 1340.46 L1070.87 1347.64 L1073.45 1335.18 L1076.14 1352.42 L1078.72 1343.75" fill="none" stroke="#ce561b" stroke-width="1.8" stroke-linejoin="round" stroke-linecap="round"/>
<rect x="1015.2" y="1384.2" width="19" height="18.5" rx="3.5" fill="none" stroke="#333" stroke-width="2"/>
<path d="M1070.4 1377.1000000000001 H1065.8000000000002 V1402.2 H1070.4 M1077.3000000000002 1377.1000000000001 H1081.9 V1402.2 H1077.3000000000002" fill="none" stroke="#ce561b" stroke-width="2.8" stroke-linejoin="round" stroke-linecap="round"/>
<path d="M1069.27 1386.46 L1070.87 1393.64 L1073.45 1381.18 L1076.14 1398.42 L1078.72 1389.75" fill="none" stroke="#ce561b" stroke-width="1.8" stroke-linejoin="round" stroke-linecap="round"/>
<rect x="1349.2" y="1145.9" width="10.6" height="27.7" rx="2.5" fill="#ce561b"/>
<path d="M1348.2 1166.5 L1353.4 1150.3 L1358.4 1166.8 L1361 1163.5" fill="none" stroke="#fff" stroke-width="2.2" stroke-linejoin="round"/>
<path d="M1345.3 1159.6 L1347.9 1164.6 M1362 1161.6 L1366 1168" fill="none" stroke="#ce561b" stroke-width="2" stroke-linecap="round"/>
<path d="M53.0 327.5 L384.0 327.5 L389.0 275.0 L392.0 250.0 L400.0 235.0 L404.0 150.0 L407.0 137.0 L412.0 136.3 L420.7 139.3 L426.5 139.1 L433.3 140.0 L441.7 136.9 L446.3 140.3 L453.0 141.4 L457.5 139.9 L465.6 138.0 L474.9 141.5 L479.5 137.5 L486.7 141.6 L493.1 138.9 L499.7 136.5 L505.3 138.1 L512.3 137.6 L518.0 137.3 L524.8 137.7 L529.4 141.3 L536.7 141.8 L542.1 144.3 L550.9 140.0 L557.1 141.9 L565.1 144.2 L571.7 144.6 L579.6 141.5 L587.0 143.9 L595.7 142.6 L603.2 139.0 L608.9 142.2 L615.5 139.6 L622.7 141.7 L630.6 140.5 L637.3 140.7 L645.7 140.9 L652.1 140.7 L656.8 137.7 L664.8 142.3 L672.3 140.5 L677.6 140.4 L687.0 141.9 L694.2 143.2 L699.9 141.5 L709.2 141.0 L715.9 138.8 L723.2 142.1 L727.7 142.5 L736.3 143.2 L744.5 143.0 L751.6 141.3 L758.2 137.2 L767.1 138.6 L772.6 138.8 L779.5 137.8 L785.8 138.5 L793.4 139.2 L800.2 135.8 L805.8 135.1 L813.2 139.1 L821.7 140.4 L830.3 137.5 L839.0 138.8 L843.9 135.2 L848.5 138.2 L854.2 135.4 L861.9 135.6 L866.7 134.4 L873.9 133.9 L879.7 137.1 L886.5 136.0 L893.4 133.5 L899.8 134.9 L905.2 133.5 L914.2 135.3 L919.8 136.7 L928.4 133.5 L933.0 132.9 L941.1 132.6 L949.1 135.7 L956.3 134.1 L965.7 137.0 L972.8 134.6 L980.5 134.5 L987.9 134.0 L995.5 132.0 L1001.5 136.8 L1010.4 134.7 L1019.2 133.7 L1028.4 135.9 L1035.0 133.7 L1039.5 136.7 L1044.2 137.6 L1053.5 136.3 L1058.9 137.6 L1068.2 137.1 L1075.3 134.7 L1081.5 132.5 L1089.4 132.8 L1094.9 130.9 L1102.7 131.1 L1109.7 131.4 L1118.6 135.0 L1123.1 132.2 L1129.3 135.9 L1137.7 133.3 L1143.3 134.3 L1151.9 136.2 L1158.2 136.8 L1166.1 134.4 L1175.5 131.6 L1183.7 129.4 L1189.0 133.6 L1194.6 134.5 L1202.1 135.3 L1208.4 132.4 L1214.4 134.4 L1221.9 135.8 L1230.8 131.1 L1238.1 128.8 L1242.8 127.5 L1251.6 131.4 L1260.3 130.2 L1267.8 132.4 L1274.2 132.0 L1279.8 128.7 L1285.7 132.2 L1293.0 134.0 L1299.8 130.6 L1308.2 132.6 L1312.8 132.4 L1317.7 128.8 L1326.7 126.7 L1332.4 131.7 L1339.0 128.4 L1344.3 127.7 L1352.5 126.5 L1361.6 127.6 L1370.9 131.4 L1376.9 129.0 L1383.8 126.9 L1391.5 125.5 L1396.1 130.9 L1402.1 130.8 L1408.8 129.0 L1413.6 131.9 L1423.0 133.5 L1428.0 129.5 L1435.6 132.5 L1442.8 131.9 L1450.7 128.9 L1457.9 127.8 L1463.6 125.9 L1469.5 130.7 L1476.2 130.8 L1484.0 132.6 L1490.4 129.3 L1496.5 127.9 L1505.3 130.9 L1511.3 128.7 L1518.5 129.2 L1526.0 127.3 L1530.6 126.4 L1535.5 127.9 L1540.3 125.6 L1548.0 125.8 L1552.0 132.0 L1560.0 327.5 L1870.0 327.5" fill="none" stroke="#4055a8" stroke-width="2.0" stroke-linejoin="round"/>
<path d="M53.0 327.5 L386.0 327.5 L391.0 246.0 L406.0 246.0 L408.0 150.0 L411.0 137.0 L416.0 146.0 L425.2 141.7 L430.2 144.8 L438.3 145.2 L444.4 145.0 L451.9 144.8 L457.2 143.8 L463.7 145.3 L473.2 147.5 L480.4 145.3 L486.2 141.8 L490.9 143.0 L496.9 143.0 L505.9 144.1 L513.2 142.8 L517.8 142.7 L523.0 144.0 L532.5 145.7 L537.9 147.8 L546.4 147.9 L555.4 148.2 L563.9 145.8 L573.3 148.7 L578.6 148.7 L586.7 146.9 L593.8 146.3 L602.9 146.2 L611.6 145.0 L620.5 147.8 L627.3 147.0 L636.4 147.5 L643.3 144.5 L649.5 146.1 L654.8 148.2 L660.6 149.0 L666.7 149.7 L674.7 147.0 L681.8 146.7 L689.3 144.3 L694.8 144.5 L704.0 145.2 L708.8 146.7 L717.0 147.9 L722.4 147.4 L727.2 146.5 L733.1 143.4 L742.0 141.1 L749.1 144.8 L754.8 142.3 L763.7 142.4 L771.8 140.0 L778.1 139.7 L786.0 138.9 L795.2 138.1 L803.4 137.7 L809.2 142.5 L814.4 140.6 L822.4 141.0 L827.1 144.9 L832.4 140.6 L838.6 142.3 L846.8 139.8 L853.0 138.1 L859.7 141.9 L867.9 144.5 L876.2 145.3 L884.2 143.1 L889.9 143.3 L896.0 139.8 L902.7 143.0 L907.8 142.6 L914.3 141.9 L919.5 144.4 L925.3 143.2 L931.9 138.9 L939.2 137.7 L944.0 136.4 L949.3 136.2 L957.0 138.7 L966.4 142.4 L975.9 139.5 L982.6 138.3 L990.0 140.1 L998.5 141.3 L1004.3 140.0 L1011.4 136.7 L1016.1 137.8 L1021.2 140.2 L1026.9 137.3 L1032.3 136.7 L1037.9 138.3 L1044.7 137.6 L1052.4 136.5 L1061.4 140.7 L1069.6 139.2 L1076.6 139.4 L1081.4 138.4 L1088.5 136.4 L1093.5 139.4 L1099.8 138.9 L1108.9 139.1 L1114.9 141.6 L1121.2 136.5 L1129.2 134.7 L1135.2 138.5 L1143.1 134.9 L1149.8 135.7 L1156.7 134.7 L1164.2 133.4 L1170.1 134.6 L1179.3 133.2 L1187.6 133.2 L1194.9 134.4 L1201.7 137.2 L1208.2 134.4 L1213.3 132.8 L1222.1 135.6 L1231.4 137.0 L1236.0 137.5 L1244.4 138.0 L1251.4 135.8 L1258.2 137.6 L1264.0 136.6 L1270.9 138.8 L1279.4 139.6 L1288.1 135.8 L1293.7 135.3 L1299.5 134.6 L1307.4 137.4 L1314.9 138.0 L1319.9 135.3 L1329.3 132.7 L1335.9 131.1 L1340.9 135.5 L1350.3 135.9 L1355.4 133.9 L1361.1 135.3 L1369.0 134.4 L1376.1 131.9 L1383.3 136.1 L1391.6 132.5 L1398.7 134.8 L1404.5 136.9 L1411.3 136.6 L1417.8 138.3 L1426.2 136.4 L1431.4 134.7 L1436.1 134.8 L1445.0 132.2 L1452.0 132.9 L1458.6 134.7 L1467.8 135.4 L1474.6 137.3 L1480.8 136.8 L1488.6 136.6 L1497.3 133.1 L1504.9 132.6 L1512.8 136.0 L1520.4 131.3 L1527.3 133.7 L1536.2 134.3 L1544.8 130.5 L1554.0 133.3 L1554.0 132.0 L1562.0 327.5 L1870.0 327.5" fill="none" stroke="#4055a8" stroke-width="2.0" stroke-linejoin="round"/>
<path d="M53.0 327.5 L389.0 327.5 L394.0 275.0 L397.0 250.0 L406.0 235.0 L410.0 150.0 L413.0 137.0 L418.0 138.4 L425.2 138.6 L432.7 140.4 L437.6 137.3 L446.3 137.6 L451.9 142.5 L458.8 143.7 L465.7 143.1 L470.9 142.8 L479.8 142.1 L488.0 142.7 L492.8 143.6 L500.2 141.2 L504.9 143.7 L511.8 144.0 L520.6 144.2 L529.8 142.3 L538.3 141.9 L547.4 144.5 L552.4 141.0 L558.0 144.7 L564.7 144.3 L570.7 143.4 L577.1 142.1 L584.5 143.0 L593.6 144.2 L602.7 145.8 L612.2 145.2 L617.5 146.1 L626.8 146.7 L634.2 145.7 L639.7 145.9 L647.1 142.5 L651.9 144.6 L661.3 140.5 L669.8 140.7 L675.1 140.0 L683.4 143.3 L688.2 143.1 L692.9 143.6 L699.0 144.8 L708.4 142.9 L717.9 140.7 L722.8 141.6 L727.5 139.3 L734.0 140.9 L739.3 138.0 L748.1 138.3 L757.4 142.0 L763.8 140.9 L770.9 141.5 L778.4 141.2 L786.0 143.4 L793.0 141.1 L801.1 138.8 L807.1 142.4 L814.3 141.2 L818.8 139.8 L826.2 136.6 L833.8 139.0 L838.6 140.0 L845.4 140.7 L851.7 141.2 L859.9 136.9 L864.7 139.2 L874.0 137.4 L880.8 138.7 L886.9 137.8 L892.9 137.4 L900.4 136.7 L906.8 139.3 L911.4 139.2 L919.6 137.4 L925.2 139.7 L930.9 136.8 L937.6 138.6 L942.6 137.0 L948.8 139.5 L955.5 140.7 L960.8 137.9 L968.6 140.1 L975.3 136.8 L980.4 137.2 L985.9 139.1 L994.6 135.9 L1000.5 138.4 L1008.2 139.4 L1014.4 135.6 L1020.4 138.0 L1026.2 136.2 L1032.8 135.8 L1039.3 138.7 L1044.6 134.2 L1053.8 137.6 L1063.3 136.2 L1072.5 138.6 L1078.1 138.5 L1086.8 137.9 L1093.9 135.1 L1100.1 133.5 L1105.0 135.0 L1110.9 137.0 L1115.6 138.5 L1123.6 139.1 L1132.6 139.2 L1140.0 133.6 L1148.2 132.0 L1154.2 134.3 L1161.3 133.7 L1170.5 134.6 L1176.7 132.7 L1185.5 133.1 L1193.9 132.5 L1199.4 133.3 L1208.0 131.3 L1216.5 135.1 L1225.0 136.0 L1229.5 135.2 L1238.3 131.1 L1244.2 130.6 L1251.3 131.3 L1258.2 133.8 L1262.7 130.3 L1267.8 129.1 L1272.7 133.9 L1281.5 130.3 L1288.5 130.1 L1294.5 130.2 L1302.3 131.7 L1308.6 129.8 L1314.7 128.6 L1322.0 131.7 L1328.4 129.1 L1333.8 129.7 L1341.3 132.5 L1347.7 133.9 L1355.3 132.2 L1361.7 131.8 L1369.7 131.0 L1377.7 131.0 L1383.4 131.4 L1391.4 128.6 L1398.0 129.5 L1406.9 133.2 L1413.3 134.5 L1421.7 131.1 L1428.5 128.6 L1437.1 130.9 L1446.1 132.7 L1453.9 133.1 L1461.2 129.2 L1468.6 126.8 L1473.9 130.6 L1478.6 128.0 L1483.6 131.8 L1489.0 128.0 L1497.7 126.9 L1506.4 129.9 L1515.1 132.9 L1522.5 133.3 L1527.2 133.3 L1534.2 132.9 L1539.3 132.9 L1548.4 128.5 L1554.5 129.7 L1556.0 132.0 L1564.0 327.5 L1870.0 327.5" fill="none" stroke="#4055a8" stroke-width="2.0" stroke-linejoin="round"/>
<path d="M53.0 327.5 L392.0 327.5 L397.0 275.0 L400.0 250.0 L409.0 235.0 L413.0 150.0 L416.0 137.0 L421.0 142.9 L426.0 143.3 L431.3 141.4 L437.8 146.0 L446.3 147.2 L451.9 146.3 L457.8 143.7 L462.8 142.8 L472.0 146.4 L480.5 147.9 L486.0 145.5 L493.6 147.2 L502.4 148.9 L507.3 148.0 L515.2 147.1 L520.6 146.5 L525.5 149.2 L534.3 148.0 L540.3 149.8 L547.7 150.6 L556.4 148.6 L563.0 148.3 L569.7 145.5 L575.7 148.4 L580.4 144.9 L588.0 144.9 L595.2 146.2 L601.4 150.1 L606.9 148.0 L612.4 148.4 L618.3 146.8 L626.5 145.8 L633.8 149.0 L638.8 145.0 L644.5 147.7 L652.0 145.4 L658.2 144.0 L665.0 142.4 L673.0 147.1 L682.3 148.1 L691.6 143.9 L697.5 148.0 L705.9 146.2 L715.1 146.7 L723.7 144.7 L729.1 144.8 L734.3 144.4 L743.6 143.8 L748.2 141.7 L753.5 145.4 L759.8 143.9 L764.8 147.5 L771.4 144.2 L776.2 141.7 L781.6 144.5 L786.8 141.7 L793.8 141.6 L803.3 140.7 L810.4 144.4 L817.0 147.4 L823.9 143.9 L830.4 141.0 L837.0 141.0 L846.0 144.6 L853.0 141.1 L858.7 140.8 L864.3 140.6 L873.1 139.8 L877.9 144.4 L885.2 146.8 L891.7 147.3 L899.5 146.7 L907.7 144.5 L912.7 141.7 L921.5 144.7 L930.7 142.4 L938.4 144.3 L946.2 145.1 L953.3 144.5 L961.2 141.6 L970.3 144.6 L975.2 146.1 L984.5 144.7 L989.2 145.5 L994.4 146.3 L1002.2 140.8 L1007.6 141.9 L1014.9 143.1 L1024.0 140.1 L1028.6 143.3 L1033.1 144.3 L1038.2 144.4 L1046.6 144.7 L1053.9 144.8 L1059.4 143.5 L1065.5 144.2 L1073.9 141.8 L1081.0 137.8 L1085.7 139.6 L1092.6 142.1 L1100.2 138.5 L1106.5 140.8 L1113.6 137.0 L1122.3 140.4 L1127.2 140.1 L1133.6 141.4 L1139.7 138.4 L1146.6 141.7 L1151.6 137.7 L1159.2 140.7 L1166.3 139.2 L1175.1 140.5 L1179.9 141.8 L1185.4 138.6 L1194.0 137.9 L1202.5 135.8 L1211.4 134.9 L1216.7 136.5 L1222.9 137.4 L1231.9 138.8 L1236.4 136.9 L1243.6 137.1 L1251.7 137.0 L1256.6 135.5 L1265.3 135.4 L1273.7 139.3 L1281.3 139.0 L1288.8 136.5 L1297.9 136.2 L1307.0 135.1 L1315.8 137.6 L1323.4 136.5 L1328.6 138.1 L1334.9 138.1 L1340.0 134.4 L1345.3 137.3 L1350.6 139.2 L1357.0 137.9 L1363.3 137.6 L1368.2 136.1 L1377.4 133.9 L1385.2 133.8 L1391.2 131.9 L1395.8 136.8 L1404.4 138.1 L1413.0 139.5 L1418.3 137.9 L1425.2 137.0 L1434.4 137.8 L1443.8 134.0 L1451.5 135.8 L1459.8 136.2 L1468.4 134.3 L1477.5 134.1 L1485.0 137.1 L1493.1 134.7 L1498.7 133.7 L1506.3 137.4 L1515.3 135.3 L1521.8 137.0 L1527.8 135.1 L1532.3 132.8 L1539.5 135.0 L1547.1 133.9 L1553.0 132.0 L1566.0 327.5 L1870.0 327.5" fill="none" stroke="#4055a8" stroke-width="2.0" stroke-linejoin="round"/>
<path d="M53.0 327.5 L398.0 327.5 L403.0 275.0 L406.0 250.0 L412.0 235.0 L416.0 150.0 L419.0 137.0 L424.0 142.4 L432.2 143.9 L441.4 144.4 L450.5 140.2 L457.4 144.1 L465.1 145.7 L470.2 143.7 L475.9 143.3 L483.3 139.9 L488.9 140.1 L497.9 143.3 L503.2 145.0 L508.4 144.7 L513.6 140.7 L522.4 140.3 L528.0 145.1 L536.9 142.9 L546.2 143.6 L554.1 141.9 L563.3 144.3 L572.6 146.7 L578.6 144.5 L583.9 142.1 L588.7 142.1 L593.0 140.3 L601.0 246.0 L604.3 245.1 L612.3 245.7 L620.3 245.5 L628.3 245.3 L636.3 245.9 L644.3 245.7 L652.3 245.3 L660.3 245.3 L668.3 245.6 L676.3 244.7 L684.3 245.6 L692.3 244.6 L700.3 245.1 L708.3 245.5 L716.3 244.4 L724.3 245.0 L732.3 244.6 L740.3 244.7 L748.3 243.9 L756.3 243.5 L764.3 243.5 L772.3 244.5 L780.3 243.9 L788.3 244.4 L796.3 244.8 L804.3 244.9 L812.3 244.1 L820.3 243.7 L828.3 243.7 L836.3 244.0 L844.3 243.2 L852.3 243.7 L860.3 243.9 L868.3 244.1 L876.3 242.9 L884.3 243.7 L892.3 242.8 L900.3 242.6 L908.3 242.9 L916.3 243.4 L924.3 242.8 L932.3 243.3 L940.3 243.0 L945.0 242.0 L953.0 140.0 L957.0 137.8 L962.4 135.8 L967.6 138.7 L977.1 136.6 L981.9 140.8 L989.0 139.0 L994.7 139.3 L1003.3 138.5 L1010.0 135.5 L1019.0 134.0 L1026.0 138.3 L1031.2 139.6 L1040.4 139.4 L1048.8 135.9 L1055.5 134.5 L1064.2 134.8 L1071.0 139.3 L1079.8 141.1 L1086.5 138.7 L1094.7 137.5 L1100.6 136.5 L1105.9 135.8 L1115.3 139.1 L1122.9 137.6 L1129.1 134.2 L1135.0 137.1 L1143.8 135.6 L1152.3 137.5 L1160.2 137.6 L1168.5 135.6 L1176.6 134.1 L1183.5 136.5 L1191.4 134.5 L1200.7 135.7 L1208.1 132.2 L1215.3 132.1 L1223.2 133.3 L1231.8 134.9 L1240.2 133.6 L1248.0 135.5 L1256.6 133.8 L1265.3 136.2 L1273.3 137.9 L1282.5 135.7 L1289.7 132.4 L1298.4 135.7 L1305.3 135.7 L1313.4 135.8 L1318.7 136.2 L1326.1 135.6 L1332.7 135.1 L1341.1 134.9 L1349.2 130.9 L1354.5 131.7 L1362.2 130.6 L1370.2 132.7 L1374.9 132.6 L1380.5 129.9 L1385.7 130.3 L1391.1 129.7 L1395.8 131.1 L1402.2 132.7 L1409.6 131.0 L1418.6 128.6 L1425.2 129.3 L1431.7 128.6 L1440.4 129.8 L1445.1 131.9 L1450.0 132.4 L1456.2 132.8 L1465.5 134.4 L1472.1 135.1 L1479.8 132.6 L1485.0 132.9 L1492.4 135.2 L1501.7 134.0 L1507.9 135.3 L1512.5 130.9 L1519.8 132.1 L1525.0 132.7 L1533.9 131.3 L1540.6 129.7 L1546.6 133.7 L1553.0 135.4 L1555.0 132.0 L1561.0 327.5 L1870.0 327.5" fill="none" stroke="#4055a8" stroke-width="2.0" stroke-linejoin="round"/>
<path d="M53.0 327.5 L388.0 327.5 L393.0 275.0 L396.0 250.0 L402.0 235.0 L406.0 150.0 L409.0 137.0 L414.0 140.9 L422.6 140.0 L428.4 136.5 L436.2 138.0 L444.5 138.1 L452.9 137.6 L461.4 140.3 L468.0 140.4 L475.9 138.3 L483.1 141.3 L489.0 142.7 L496.9 143.7 L503.1 139.4 L511.6 142.0 L518.3 138.8 L523.8 140.8 L529.7 143.8 L537.2 140.4 L545.0 140.0 L554.1 143.4 L561.2 143.2 L569.2 144.3 L578.6 139.9 L584.9 141.6 L590.9 142.4 L595.8 144.6 L603.0 140.7 L610.8 140.1 L616.3 140.9 L621.5 139.4 L630.3 141.8 L634.8 143.4 L639.4 141.2 L648.5 141.9 L654.5 140.7 L660.9 138.5 L670.4 137.0 L677.0 140.6 L683.5 143.7 L689.3 145.0 L698.2 143.6 L707.2 141.4 L715.8 142.6 L722.9 141.0 L730.9 139.9 L735.9 141.4 L741.7 140.5 L750.1 137.9 L754.7 136.5 L762.2 137.2 L768.0 138.1 L777.1 137.2 L783.6 140.7 L791.2 138.3 L798.1 138.5 L803.3 137.9 L809.3 140.3 L815.4 140.4 L824.8 142.1 L831.2 140.7 L837.3 138.8 L844.2 140.4 L853.4 137.8 L857.9 137.6 L862.7 134.9 L871.1 134.0 L879.2 135.2 L888.4 138.7 L893.2 136.1 L902.4 137.5 L909.0 139.2 L917.6 138.0 L924.4 134.9 L930.7 133.8 L938.4 136.1 L943.6 137.3 L948.6 134.5 L956.3 135.4 L965.3 136.8 L973.3 134.1 L982.0 132.6 L989.6 137.1 L998.6 138.9 L1005.4 138.5 L1013.8 134.6 L1023.0 137.7 L1029.7 138.2 L1036.5 135.2 L1044.5 132.4 L1053.0 136.9 L1059.0 138.6 L1063.9 138.8 L1069.8 139.5 L1076.4 139.5 L1081.1 134.2 L1089.7 135.2 L1096.9 131.7 L1102.2 132.3 L1107.0 136.4 L1115.3 137.9 L1123.3 134.7 L1128.2 135.7 L1133.3 134.9 L1140.1 134.1 L1145.0 131.1 L1152.1 129.4 L1159.2 129.3 L1165.1 129.2 L1172.5 130.6 L1178.1 130.1 L1185.4 134.2 L1192.0 131.2 L1198.1 130.4 L1205.4 133.3 L1212.8 130.8 L1218.9 130.9 L1225.6 130.9 L1235.1 131.8 L1242.9 133.2 L1250.6 134.3 L1257.0 133.9 L1266.4 130.4 L1274.0 130.2 L1278.8 127.9 L1287.1 127.2 L1295.1 126.7 L1301.5 126.1 L1308.7 130.5 L1314.3 131.1 L1323.4 129.6 L1330.3 131.6 L1339.1 129.0 L1346.9 127.5 L1352.0 132.2 L1356.7 133.9 L1365.0 133.1 L1373.1 132.6 L1379.1 131.0 L1384.6 132.9 L1393.0 133.2 L1398.5 132.1 L1404.3 132.9 L1412.5 134.5 L1420.6 133.2 L1429.0 128.8 L1436.4 126.4 L1442.8 125.9 L1452.0 125.0 L1461.1 130.4 L1467.8 132.1 L1472.6 128.4 L1477.1 126.3 L1481.6 130.2 L1486.6 130.4 L1492.4 127.5 L1499.0 126.5 L1508.4 127.3 L1515.9 128.8 L1523.5 128.9 L1529.4 126.7 L1538.0 132.0 L1545.0 242.0 L1556.0 243.0 L1562.0 327.5 L1870.0 327.5" fill="none" stroke="#4055a8" stroke-width="2.0" stroke-linejoin="round"/>
<path d="M54.0 498.1 L62.6 498.9 L70.5 499.2 L78.6 499.8 L85.9 500.2 L94.2 500.4 L104.5 502.1 L112.1 502.7 L121.2 503.2 L130.5 504.2 L138.7 504.6 L147.7 506.0 L158.4 506.9 L167.2 507.7 L178.2 508.7 L185.9 508.8 L193.8 509.3 L204.3 510.1 L212.6 510.2 L220.1 511.3 L230.9 512.3 L238.0 512.1 L245.5 512.6 L253.3 513.1 L262.1 513.8 L271.2 514.2 L278.4 515.2 L287.1 515.8 L295.4 515.4 L306.3 516.2 L314.0 517.3 L324.7 517.1 L335.5 517.5 L343.0 517.9 L353.5 519.1 L362.8 519.9 L370.9 519.8 L378.3 520.2 L387.6 515.7 L394.8 510.9 L401.8 505.2 L409.4 503.6 L417.7 506.9 L427.4 503.6 L434.7 504.0 L443.5 504.4 L452.7 505.7 L462.2 503.5 L470.3 506.3 L479.4 506.7 L490.1 506.3 L499.6 505.7 L507.8 502.9 L516.3 501.7 L524.0 500.9 L531.7 500.1 L539.3 503.2 L546.5 504.1 L556.3 501.7 L565.2 502.8 L576.0 503.0 L583.5 500.2 L591.2 499.5 L601.5 502.9 L607.0 502.4 L616.6 493.1 L624.1 488.3 L631.2 490.5 L637.2 487.0 L645.3 487.2 L655.1 484.8 L662.2 477.4 L671.7 481.0 L680.7 479.6 L690.5 474.0 L696.4 478.7 L702.8 479.0 L710.7 479.0 L717.0 482.7 L724.9 473.7 L731.4 476.0 L740.8 475.3 L750.5 468.6 L755.8 466.7 L765.4 463.6 L774.6 463.1 L784.1 456.5 L789.2 454.2 L794.7 449.7 L800.9 446.0 L808.3 445.9 L818.1 444.4 L827.2 434.0 L835.1 430.7 L842.2 424.4 L849.5 429.4 L858.9 426.8 L864.4 425.0 L871.4 417.9 L878.9 414.1 L885.2 418.1 L893.1 413.4 L900.8 406.4 L906.2 402.9 L913.0 409.5 L918.2 404.9 L927.6 400.5 L935.1 405.4 L943.9 399.9 L950.4 395.6 L957.1 400.5 L965.0 394.8 L974.7 390.2 L980.8 389.2 L986.4 392.4 L991.4 386.5 L996.6 383.5 L1005.9 385.2 L1014.8 393.3 L1020.1 400.2 L1025.3 402.5 L1035.1 401.7 L1042.0 399.7 L1050.4 398.9 L1056.2 392.5 L1062.0 388.4 L1067.5 390.2 L1073.2 391.6 L1079.7 393.5 L1085.0 389.7 L1092.3 387.9 L1097.4 380.4 L1107.1 378.6 L1113.9 373.7 L1121.8 380.6 L1130.0 382.1 L1138.1 371.6 L1146.2 372.9 L1156.1 374.8 L1164.7 367.6 L1171.9 371.0 L1179.6 369.5 L1185.0 368.0 L1190.4 362.7 L1199.1 366.0 L1205.1 368.1 L1210.5 371.0 L1220.3 374.8 L1229.7 375.5 L1239.5 373.9 L1245.1 370.8 L1250.1 370.3 L1255.7 370.1 L1264.5 372.9 L1271.1 371.4 L1280.0 373.0 L1289.4 372.5 L1294.5 380.2 L1301.9 383.8 L1310.4 383.7 L1316.7 382.9 L1322.2 385.4 L1331.5 383.3 L1337.1 378.1 L1344.4 375.4 L1354.2 382.9 L1361.6 378.2 L1369.2 384.7 L1376.4 384.2 L1383.7 377.5 L1390.2 375.9 L1398.6 371.8 L1404.7 365.7 L1414.4 368.1 L1421.5 366.2 L1428.6 358.2 L1434.0 357.9 L1439.0 369.2 L1444.8 379.4 L1451.8 387.7 L1457.7 382.2 L1466.6 383.9 L1474.4 382.5 L1482.4 389.0 L1492.3 390.6 L1500.0 386.7 L1509.2 389.8 L1516.2 387.9 L1521.2 388.6 L1528.7 383.7 L1538.5 388.7 L1546.0 392.0 L1553.8 389.9 L1558.9 391.5 L1566.3 391.8 L1574.2 397.2 L1582.7 399.8 L1593.7 403.4 L1604.6 406.1 L1615.0 411.5 L1623.9 411.5 L1631.5 412.8 L1640.5 414.5 L1650.3 417.0 L1659.6 418.5 L1667.0 419.0 L1674.1 420.8 L1684.9 421.8 L1692.8 423.0 L1702.9 423.8 L1710.8 425.7 L1720.6 426.3 L1728.9 428.3 L1738.3 430.1 L1749.0 431.0 L1759.7 431.7 L1769.1 434.2 L1776.9 435.4 L1785.5 435.5 L1794.3 437.6 L1803.0 437.9 L1811.1 439.4 L1821.1 440.3 L1830.5 441.8 L1839.5 444.2 L1849.9 444.6 L1859.8 446.4 L1868.8 448.5 L1870.0 447.5" fill="none" stroke="#068c45" stroke-width="1.9" stroke-linejoin="round"/>
<path d="M54.0 519.9 L61.9 520.4 L70.8 520.1 L80.3 519.9 L88.1 520.2 L96.0 520.8 L104.7 520.8 L112.8 520.8 L122.6 521.7 L131.0 522.1 L139.3 522.3 L147.2 522.3 L155.9 522.8 L165.9 522.3 L173.3 522.7 L181.2 522.7 L192.0 523.7 L199.0 523.1 L208.6 524.3 L219.1 524.8 L229.1 525.1 L238.0 525.9 L245.5 526.2 L255.3 526.1 L265.4 526.4 L276.3 527.6 L285.1 528.0 L296.0 528.4 L303.8 529.0 L314.4 529.1 L324.5 529.7 L334.2 530.3 L345.0 531.0 L355.9 532.1 L363.4 532.6 L373.5 532.3 L382.8 531.6 L390.0 526.0 L398.4 523.3 L405.7 517.7 L416.2 516.0 L426.1 517.2 L436.1 517.4 L447.0 517.5 L454.9 516.3 L462.9 517.5 L473.7 520.9 L484.0 525.5 L492.9 523.2 L500.7 526.8 L509.4 527.4 L516.9 524.1 L525.3 524.5 L533.1 526.1 L542.5 525.8 L550.7 523.6 L558.8 522.6 L567.3 521.7 L578.2 518.3 L587.6 515.1 L597.9 514.8 L607.3 512.8 L612.8 514.9 L617.9 507.3 L625.3 510.6 L633.8 509.7 L640.5 504.3 L648.5 497.2 L654.0 495.0 L659.4 489.5 L665.3 495.4 L673.4 494.4 L681.2 489.5 L690.7 484.1 L697.0 480.7 L702.4 475.5 L708.7 478.9 L714.7 477.1 L721.1 478.0 L727.3 473.9 L736.1 473.1 L745.6 462.5 L752.9 459.1 L762.4 455.9 L771.4 455.4 L780.2 456.0 L789.5 454.7 L796.5 450.5 L806.1 447.6 L813.3 445.3 L822.3 437.9 L829.5 433.7 L839.2 427.1 L848.9 423.1 L855.2 427.9 L863.7 424.1 L870.2 425.0 L879.0 422.5 L886.4 421.5 L895.5 425.3 L903.7 418.9 L910.8 417.8 L918.9 415.6 L927.0 416.3 L934.7 420.6 L941.7 413.8 L946.8 408.4 L955.2 411.0 L963.5 401.1 L968.7 398.8 L974.0 391.7 L982.2 386.1 L989.6 388.6 L997.1 385.4 L1004.6 395.3 L1010.5 398.8 L1016.7 401.7 L1021.9 397.9 L1027.9 401.6 L1034.1 402.3 L1040.6 403.1 L1050.1 400.9 L1056.1 392.3 L1063.4 390.5 L1068.5 394.4 L1077.7 395.7 L1087.2 392.0 L1094.8 394.4 L1101.7 392.0 L1108.1 392.3 L1116.2 392.0 L1125.5 386.6 L1133.0 379.0 L1139.0 374.8 L1147.1 373.7 L1152.2 377.0 L1160.5 372.6 L1166.7 380.4 L1175.2 382.5 L1181.5 375.6 L1189.8 379.3 L1197.7 375.5 L1205.8 383.0 L1213.2 382.5 L1219.0 381.1 L1225.1 377.6 L1234.9 379.3 L1240.6 383.3 L1246.5 387.2 L1252.6 383.6 L1259.0 379.3 L1268.1 383.9 L1276.1 389.6 L1281.7 390.0 L1288.3 391.1 L1298.1 386.6 L1307.3 385.2 L1312.8 385.0 L1321.0 386.1 L1328.3 382.3 L1336.4 387.6 L1344.5 385.5 L1353.1 393.1 L1359.7 391.7 L1366.9 395.8 L1376.7 401.6 L1381.7 398.7 L1389.6 403.4 L1397.9 403.7 L1403.8 397.3 L1410.3 393.0 L1418.9 396.6 L1427.4 398.2 L1435.8 391.1 L1443.5 393.7 L1449.6 391.1 L1458.9 387.9 L1463.9 395.1 L1473.4 391.9 L1480.3 395.6 L1488.4 393.6 L1495.2 395.2 L1502.5 392.4 L1512.5 395.1 L1519.3 398.1 L1525.2 394.4 L1532.6 391.4 L1539.7 391.4 L1548.5 397.3 L1557.7 395.3 L1563.4 399.6 L1571.4 401.0 L1576.7 404.4 L1586.6 410.4 L1594.0 413.3 L1604.0 414.9 L1611.4 419.8 L1618.5 422.0 L1625.7 426.4 L1633.9 428.4 L1643.5 431.1 L1653.2 432.2 L1660.6 434.1 L1667.7 434.7 L1676.8 437.0 L1684.3 437.9 L1691.3 439.7 L1699.0 440.8 L1707.3 441.5 L1718.1 443.3 L1725.2 445.3 L1732.3 446.3 L1740.7 447.8 L1751.4 450.5 L1760.9 451.9 L1770.4 454.1 L1778.9 455.0 L1788.8 456.5 L1797.2 458.4 L1806.6 459.3 L1814.9 460.6 L1823.8 463.2 L1833.3 464.7 L1840.6 465.6 L1851.2 467.8 L1861.6 469.1 L1868.8 470.0 L1870.0 470.5" fill="none" stroke="#068c45" stroke-width="1.9" stroke-linejoin="round"/>
<path d="M54.0 524.6 L63.7 525.3 L73.5 526.3 L83.5 526.2 L91.4 526.8 L99.9 527.9 L109.8 528.2 L118.2 528.3 L127.6 529.5 L135.3 529.7 L143.7 530.3 L151.7 530.2 L161.4 530.8 L171.0 532.1 L180.3 533.0 L190.5 532.7 L198.5 533.6 L207.4 533.5 L217.7 534.6 L226.5 535.2 L234.1 535.7 L241.7 536.2 L252.5 536.4 L260.5 537.1 L271.0 537.4 L279.6 538.2 L287.3 538.2 L297.3 539.3 L306.6 539.9 L314.0 540.3 L322.9 540.8 L330.6 540.8 L339.7 541.8 L349.3 542.9 L357.8 542.9 L366.1 543.4 L375.8 543.8 L383.2 542.5 L393.3 540.5 L402.0 535.0 L410.3 534.3 L420.4 530.3 L428.7 528.3 L435.9 529.5 L444.3 527.1 L455.2 527.6 L463.3 528.4 L473.6 526.5 L482.3 529.3 L493.0 534.2 L501.3 539.2 L510.9 541.0 L521.2 538.9 L531.8 536.3 L541.2 536.2 L550.0 532.6 L560.3 532.5 L569.1 531.9 L577.3 532.7 L585.4 529.5 L594.9 528.9 L603.2 522.9 L610.4 522.8 L618.1 523.6 L624.5 516.6 L629.8 518.3 L639.5 518.5 L649.2 510.4 L655.2 512.7 L662.2 508.9 L671.4 501.8 L681.1 498.4 L689.0 500.9 L696.8 500.7 L703.4 494.3 L711.7 497.9 L717.0 489.4 L726.9 483.4 L732.6 485.4 L739.2 486.8 L746.5 486.8 L752.1 479.6 L758.0 482.1 L768.0 476.0 L774.1 469.8 L780.1 476.2 L789.8 475.4 L795.7 465.3 L805.7 467.6 L815.1 469.2 L824.4 459.2 L833.8 460.5 L843.7 455.8 L850.7 452.8 L859.5 455.6 L868.8 455.1 L877.8 451.8 L883.1 447.1 L888.4 444.4 L897.1 449.8 L907.0 451.0 L913.0 444.5 L919.9 443.1 L925.5 446.6 L934.2 442.9 L942.0 442.7 L949.8 441.8 L958.0 444.5 L964.5 435.1 L970.2 436.4 L977.6 439.0 L985.3 438.3 L994.5 430.5 L1000.7 430.4 L1007.8 424.4 L1013.0 429.5 L1022.9 429.6 L1028.5 421.8 L1036.6 422.8 L1046.3 423.2 L1054.7 418.5 L1059.9 424.4 L1068.1 427.2 L1074.9 424.3 L1082.3 425.1 L1090.3 425.7 L1096.1 423.6 L1102.9 423.9 L1110.0 416.8 L1115.0 417.8 L1120.7 420.5 L1130.1 416.1 L1138.8 417.8 L1146.6 411.7 L1156.4 411.3 L1161.8 415.9 L1171.6 417.1 L1179.9 412.0 L1189.8 411.2 L1198.4 413.7 L1205.4 416.4 L1212.4 413.7 L1218.5 407.6 L1225.9 404.0 L1234.4 402.7 L1241.0 409.6 L1250.3 412.4 L1259.1 406.7 L1265.8 409.5 L1273.6 412.0 L1283.2 407.5 L1289.0 410.7 L1298.0 407.7 L1306.2 408.2 L1313.7 404.2 L1320.7 409.2 L1330.1 411.0 L1339.7 407.1 L1346.4 409.7 L1351.4 410.4 L1356.6 408.7 L1362.0 404.2 L1367.4 404.5 L1374.7 408.5 L1381.7 409.0 L1391.3 410.7 L1398.0 410.9 L1404.1 405.7 L1413.7 403.9 L1419.7 400.6 L1426.3 403.7 L1434.7 404.0 L1443.0 402.9 L1448.9 395.9 L1454.7 392.8 L1462.3 394.8 L1470.4 391.9 L1478.3 394.9 L1487.5 390.4 L1495.0 389.5 L1500.1 388.4 L1506.6 395.3 L1516.5 390.2 L1523.2 394.5 L1528.8 394.6 L1535.7 398.7 L1545.5 404.4 L1551.7 400.5 L1559.0 404.1 L1567.5 409.7 L1576.4 408.4 L1583.0 413.6 L1592.0 417.9 L1601.7 418.4 L1612.7 421.8 L1620.5 422.5 L1631.2 425.0 L1639.4 428.0 L1649.8 432.3 L1659.2 434.4 L1669.7 436.1 L1680.2 437.5 L1689.0 440.2 L1696.8 441.7 L1705.5 443.1 L1712.9 445.1 L1723.8 447.8 L1734.3 449.4 L1743.7 451.7 L1750.8 451.8 L1759.9 454.4 L1769.4 455.4 L1778.7 457.7 L1788.6 459.0 L1798.1 461.3 L1807.1 463.8 L1815.4 464.8 L1822.9 466.9 L1832.8 468.4 L1842.1 470.8 L1852.1 472.3 L1860.9 474.0 L1868.3 475.8 L1870.0 476.3" fill="none" stroke="#068c45" stroke-width="1.9" stroke-linejoin="round"/>
<path d="M54.0 525.5 L64.5 528.9 L71.5 530.8 L79.5 533.4 L89.9 535.6 L99.3 538.2 L107.4 538.9 L116.0 539.3 L126.8 540.1 L134.0 540.0 L144.8 540.9 L154.3 541.3 L164.0 541.1 L172.6 541.4 L180.4 542.2 L187.5 542.1 L197.4 543.2 L205.6 543.8 L215.9 543.4 L226.6 543.7 L235.5 543.9 L242.9 544.8 L253.2 544.8 L261.5 545.6 L270.9 545.6 L280.7 545.9 L291.4 546.9 L301.1 547.8 L309.0 547.5 L318.5 548.5 L329.2 549.0 L338.6 549.0 L348.8 549.6 L359.3 550.2 L368.3 550.5 L376.1 549.4 L386.1 545.8 L393.2 540.7 L401.9 537.9 L410.3 534.9 L421.1 532.2 L429.9 532.8 L438.2 529.7 L445.9 529.1 L456.2 524.8 L465.7 526.8 L476.0 530.8 L484.2 535.9 L493.1 535.9 L503.9 533.9 L512.8 536.1 L521.2 536.5 L530.7 536.9 L540.0 536.6 L548.9 533.1 L557.3 533.0 L566.8 532.6 L575.2 531.4 L584.3 532.9 L593.8 530.1 L601.9 531.9 L609.3 528.2 L617.2 523.2 L624.8 530.2 L631.5 523.6 L640.0 525.0 L646.6 520.9 L651.6 517.5 L660.6 518.3 L669.9 523.5 L678.6 517.7 L684.1 521.2 L690.0 513.4 L697.1 511.2 L703.5 508.7 L708.7 505.7 L718.4 504.0 L725.5 508.5 L733.3 511.7 L743.1 508.6 L750.3 507.2 L757.1 501.0 L764.5 501.5 L770.7 499.8 L777.6 493.1 L787.4 492.6 L795.2 485.9 L801.7 481.6 L811.1 483.7 L818.6 483.3 L825.8 479.4 L835.8 470.7 L844.2 468.9 L850.1 464.5 L858.0 459.7 L867.1 459.1 L873.6 457.7 L880.7 455.4 L887.2 452.8 L893.5 455.2 L901.4 450.6 L908.1 448.1 L918.0 449.2 L927.6 450.7 L936.3 447.3 L942.9 445.2 L948.5 442.4 L957.0 440.5 L964.5 440.6 L972.4 438.7 L980.2 436.0 L988.0 430.3 L996.0 430.2 L1004.3 428.0 L1012.1 429.2 L1019.4 435.0 L1028.1 436.3 L1035.9 436.8 L1045.9 436.8 L1052.0 428.7 L1058.6 430.4 L1064.7 435.6 L1072.3 437.0 L1078.0 427.2 L1085.5 432.2 L1092.0 435.5 L1097.6 436.2 L1107.5 434.0 L1115.8 432.5 L1122.2 424.9 L1130.5 429.8 L1137.3 427.5 L1142.8 423.4 L1151.6 425.4 L1160.2 431.1 L1165.4 423.8 L1175.0 423.2 L1181.0 425.9 L1189.7 427.5 L1198.9 432.2 L1204.3 430.5 L1210.7 430.8 L1219.4 432.6 L1226.9 425.8 L1236.0 431.2 L1244.5 429.0 L1252.3 428.4 L1260.9 427.7 L1267.2 425.4 L1274.6 421.9 L1282.8 424.4 L1292.3 423.3 L1300.7 427.3 L1309.5 426.3 L1317.3 419.0 L1322.8 420.2 L1330.2 416.0 L1337.9 414.5 L1344.4 416.3 L1351.0 413.7 L1356.7 420.8 L1363.2 419.8 L1369.5 414.7 L1375.8 411.5 L1381.6 411.5 L1387.1 416.9 L1396.4 413.7 L1402.3 411.1 L1409.8 410.3 L1419.0 408.8 L1426.1 406.2 L1431.4 411.6 L1436.8 409.8 L1441.8 407.4 L1451.4 416.1 L1457.4 418.7 L1467.2 417.4 L1474.4 421.6 L1480.2 416.2 L1487.9 418.7 L1495.4 425.5 L1504.2 418.2 L1513.0 418.5 L1518.5 419.9 L1526.1 421.2 L1533.5 427.9 L1540.3 431.1 L1547.5 432.0 L1554.9 427.9 L1561.2 426.4 L1570.8 432.7 L1579.8 442.2 L1584.9 440.8 L1593.1 436.2 L1603.4 435.5 L1610.5 434.4 L1618.8 432.8 L1626.4 432.9 L1636.5 430.8 L1644.7 431.8 L1653.9 433.0 L1662.0 435.2 L1670.6 437.0 L1680.2 439.3 L1688.7 440.7 L1695.8 441.9 L1703.9 444.6 L1713.6 446.6 L1720.7 448.8 L1728.1 450.5 L1737.7 452.3 L1747.5 454.2 L1755.0 456.0 L1764.8 457.6 L1772.0 459.9 L1782.0 462.0 L1792.0 464.0 L1802.6 466.8 L1812.4 468.1 L1820.7 470.4 L1828.7 472.3 L1836.3 474.2 L1847.0 476.7 L1855.2 478.9 L1865.2 480.2 L1870.0 481.9" fill="none" stroke="#068c45" stroke-width="1.9" stroke-linejoin="round"/>
<path d="M54.0 528.3 L61.4 529.4 L69.4 530.2 L77.0 531.3 L86.7 531.5 L93.9 532.6 L104.5 533.1 L111.9 534.4 L122.5 534.9 L130.0 535.8 L140.9 536.4 L149.3 537.6 L159.3 538.8 L168.8 538.9 L179.6 540.3 L190.1 540.8 L198.3 542.2 L209.0 542.2 L216.3 542.5 L226.0 543.2 L233.6 544.0 L244.5 544.9 L251.8 545.0 L260.0 545.7 L267.8 545.9 L276.2 546.6 L284.0 547.0 L293.3 548.4 L301.7 548.5 L310.4 548.8 L317.9 549.5 L328.5 550.1 L337.5 550.6 L345.9 552.2 L356.3 552.7 L364.3 553.0 L373.5 553.7 L381.6 548.0 L391.7 547.6 L402.5 542.1 L411.1 536.4 L422.1 532.7 L429.4 532.6 L439.0 532.1 L448.1 529.6 L458.3 531.5 L467.4 533.3 L475.1 534.1 L484.4 530.4 L494.8 532.9 L505.0 531.8 L514.5 532.4 L524.3 531.8 L531.8 531.3 L540.2 529.9 L547.9 532.5 L557.0 531.2 L567.4 530.2 L574.4 532.9 L585.0 535.0 L594.5 533.9 L602.6 538.4 L610.9 531.1 L620.3 533.8 L630.1 530.1 L637.3 530.6 L643.8 527.4 L653.4 531.1 L662.9 531.1 L671.1 523.0 L680.2 521.2 L688.4 524.9 L694.4 526.6 L699.8 520.3 L708.6 519.8 L716.1 522.5 L723.8 525.2 L732.9 519.2 L738.3 519.2 L748.0 515.9 L756.9 516.5 L766.7 511.7 L772.7 517.5 L782.6 520.6 L791.9 514.0 L799.6 508.3 L806.9 510.6 L812.4 507.6 L821.7 508.9 L830.1 511.8 L839.8 512.7 L846.0 508.9 L851.4 501.3 L858.3 491.5 L863.9 491.6 L872.9 482.7 L878.7 482.4 L884.5 485.3 L889.6 479.1 L899.2 481.5 L905.7 475.3 L914.0 476.9 L919.2 482.2 L924.8 480.8 L932.2 474.0 L937.7 471.5 L947.6 455.1 L954.4 453.5 L962.1 451.3 L969.8 440.9 L979.8 442.4 L987.9 445.0 L993.0 449.3 L1000.1 445.3 L1009.3 449.1 L1018.1 447.7 L1026.2 443.7 L1033.7 445.5 L1041.2 444.1 L1048.2 439.6 L1054.2 438.4 L1064.0 435.6 L1070.7 433.1 L1077.4 438.2 L1083.7 442.3 L1090.6 434.0 L1100.0 432.0 L1107.3 436.6 L1113.8 438.0 L1119.2 434.7 L1125.3 438.4 L1132.0 438.2 L1140.6 431.0 L1150.1 434.7 L1156.9 428.6 L1166.6 431.4 L1171.8 430.7 L1177.8 428.9 L1186.2 432.0 L1194.1 435.9 L1199.9 435.7 L1207.3 432.3 L1216.6 433.8 L1223.6 427.5 L1232.6 432.5 L1241.8 435.8 L1251.3 431.7 L1259.2 432.2 L1267.3 433.3 L1272.8 431.2 L1279.9 428.7 L1286.5 425.7 L1296.1 428.3 L1306.0 427.2 L1314.5 428.8 L1322.4 428.2 L1327.5 425.5 L1336.6 429.7 L1342.1 423.6 L1349.7 429.2 L1355.6 424.5 L1364.6 426.9 L1369.8 423.2 L1375.3 426.4 L1380.7 426.0 L1386.4 422.0 L1392.1 424.8 L1400.2 419.7 L1407.5 420.9 L1415.0 419.5 L1422.0 426.5 L1430.7 426.5 L1437.1 425.3 L1442.4 427.2 L1448.7 421.9 L1454.4 422.5 L1464.1 417.6 L1472.0 422.3 L1478.2 423.0 L1483.3 419.9 L1492.1 421.1 L1502.1 425.0 L1507.8 419.6 L1513.5 426.0 L1519.9 419.1 L1529.7 426.4 L1537.8 426.7 L1543.4 422.4 L1549.1 418.3 L1555.1 420.2 L1563.4 425.2 L1570.9 431.4 L1577.5 438.3 L1584.0 442.5 L1592.6 446.2 L1602.7 447.5 L1610.1 449.8 L1619.2 452.6 L1629.5 457.6 L1640.4 458.7 L1649.2 460.4 L1660.0 460.9 L1668.3 461.4 L1676.1 463.5 L1684.9 464.8 L1694.1 465.6 L1703.7 467.1 L1710.9 468.7 L1718.8 469.9 L1728.4 470.1 L1736.8 470.9 L1747.7 472.2 L1756.0 472.6 L1766.2 473.5 L1773.5 474.6 L1782.1 476.3 L1791.3 477.1 L1802.0 478.8 L1810.1 480.1 L1820.5 481.1 L1830.7 482.1 L1838.7 483.3 L1849.1 483.5 L1857.6 484.9 L1868.1 486.9 L1870.0 486.4" fill="none" stroke="#068c45" stroke-width="1.9" stroke-linejoin="round"/>
<path d="M54.0 547.0 L61.8 546.6 L69.2 547.5 L79.7 548.4 L89.4 548.7 L99.1 548.9 L108.3 548.9 L115.5 549.9 L125.7 550.8 L135.7 551.0 L143.3 551.6 L152.4 552.1 L162.6 552.6 L172.1 553.0 L180.8 553.4 L189.9 553.7 L200.8 554.5 L210.7 554.9 L218.6 555.7 L227.2 555.8 L237.7 556.6 L247.5 556.9 L257.5 558.4 L266.9 559.2 L276.2 559.8 L285.0 559.9 L295.7 560.9 L306.4 561.1 L314.5 561.2 L323.8 560.6 L331.2 561.0 L338.3 560.5 L349.1 561.3 L359.7 560.7 L370.6 560.5 L380.8 559.4 L391.6 557.3 L398.8 553.9 L408.2 547.7 L417.9 545.3 L428.1 540.5 L437.9 536.3 L447.0 532.8 L456.1 532.2 L465.1 534.6 L475.3 533.0 L485.9 533.0 L494.9 532.2 L504.6 532.0 L512.2 535.4 L522.9 534.3 L533.1 533.4 L540.3 531.2 L549.7 533.2 L558.7 534.2 L569.3 529.7 L576.7 531.1 L587.4 530.6 L597.5 530.2 L607.1 525.0 L616.3 530.5 L625.6 533.6 L634.2 525.3 L642.1 521.0 L650.8 529.3 L657.0 523.1 L666.1 529.1 L672.3 530.2 L680.9 522.4 L689.0 529.0 L695.8 520.8 L700.9 524.5 L710.7 520.7 L719.0 522.7 L726.3 524.6 L733.4 521.7 L740.6 524.8 L748.7 520.8 L755.4 517.0 L764.6 519.2 L770.3 525.2 L778.4 525.8 L785.4 519.5 L791.6 521.5 L801.4 518.2 L808.8 517.6 L816.8 519.6 L825.0 510.3 L833.4 510.5 L843.0 513.0 L851.8 514.4 L861.1 505.3 L870.9 504.4 L878.6 500.2 L887.8 500.0 L895.7 497.2 L905.5 493.9 L913.7 485.1 L918.8 485.1 L927.7 487.0 L935.3 481.2 L943.3 483.8 L949.9 480.7 L955.3 476.5 L961.4 478.8 L969.1 475.1 L978.7 470.6 L986.5 469.0 L995.3 470.7 L1003.1 466.7 L1009.3 467.7 L1019.0 466.6 L1025.1 468.5 L1032.9 467.1 L1038.6 462.8 L1044.3 460.7 L1049.9 462.0 L1057.3 462.1 L1063.9 458.4 L1069.8 452.9 L1076.0 454.2 L1081.3 457.8 L1089.2 454.8 L1096.3 457.0 L1104.6 449.2 L1111.5 445.2 L1119.2 442.3 L1125.5 447.6 L1132.5 445.5 L1140.9 444.2 L1146.3 448.2 L1154.9 443.2 L1160.6 449.1 L1168.4 441.1 L1174.2 446.7 L1179.5 441.5 L1188.4 442.1 L1194.2 439.0 L1199.2 437.1 L1206.7 438.9 L1211.8 441.9 L1220.9 437.8 L1229.7 442.5 L1235.3 443.5 L1242.1 446.2 L1249.3 443.3 L1258.2 434.9 L1266.4 431.3 L1272.9 435.1 L1278.4 439.1 L1283.6 435.7 L1288.9 437.5 L1298.2 434.9 L1304.0 438.1 L1313.9 435.7 L1323.2 434.9 L1332.8 436.8 L1339.4 432.1 L1347.4 434.4 L1352.8 431.4 L1360.7 428.4 L1367.3 431.0 L1377.1 433.3 L1386.9 434.5 L1394.5 433.6 L1400.4 427.0 L1406.8 425.1 L1411.9 425.2 L1418.8 428.3 L1426.3 428.4 L1434.6 426.5 L1442.0 429.6 L1449.9 428.8 L1458.4 426.2 L1468.1 426.5 L1474.8 428.0 L1482.5 432.5 L1488.3 431.7 L1494.6 423.7 L1502.1 426.6 L1508.1 431.5 L1517.2 423.2 L1527.2 424.8 L1537.0 425.1 L1546.6 423.9 L1552.4 422.5 L1560.7 424.6 L1568.1 431.1 L1574.0 431.9 L1580.5 430.5 L1588.9 433.3 L1598.8 438.9 L1609.2 440.1 L1619.0 440.9 L1628.3 438.0 L1636.5 439.4 L1645.7 439.3 L1656.2 440.1 L1665.5 440.7 L1673.6 440.5 L1684.1 442.7 L1692.8 445.2 L1703.4 447.6 L1714.0 450.4 L1722.2 452.6 L1730.3 454.3 L1740.5 457.1 L1750.3 460.2 L1757.3 462.2 L1767.2 463.8 L1774.8 465.1 L1784.1 468.3 L1792.4 470.6 L1801.9 473.1 L1812.3 476.0 L1820.6 477.5 L1831.1 480.6 L1841.7 482.4 L1849.8 484.3 L1860.3 487.0 L1869.7 490.5 L1870.0 490.0" fill="none" stroke="#068c45" stroke-width="1.9" stroke-linejoin="round"/>
<path d="M54.0 694.7 L61.4 693.1 L68.8 694.5 L76.5 694.1 L83.1 693.5 L90.6 692.5 L97.6 692.0 L107.0 692.6 L115.1 693.2 L123.9 692.0 L133.4 692.1 L143.2 691.2 L150.6 690.3 L159.9 691.3 L169.1 690.7 L178.8 691.4 L188.0 689.7 L197.3 691.4 L206.2 690.5 L214.7 689.8 L221.5 691.0 L230.1 691.2 L237.0 690.0 L246.3 689.0 L254.4 689.4 L261.3 690.1 L270.0 689.4 L279.0 690.5 L285.4 690.7 L292.5 689.4 L299.3 688.0 L307.6 687.7 L315.9 689.6 L325.2 688.1 L332.0 689.3 L340.1 689.8 L347.5 688.9 L355.1 687.4 L363.1 687.9 L370.6 689.0 L379.4 684.8 L385.5 678.3 L392.1 670.8 L398.3 670.1 L405.5 663.4 L413.1 672.3 L420.5 673.6 L428.8 671.3 L436.8 669.1 L443.6 668.4 L451.0 666.3 L459.0 667.3 L467.3 660.5 L473.4 661.8 L480.1 675.4 L489.4 672.3 L498.6 675.7 L507.2 672.7 L514.5 671.4 L521.6 667.8 L530.3 664.6 L540.0 663.1 L546.4 664.7 L553.5 662.3 L561.7 658.9 L568.5 661.8 L578.2 656.3 L584.6 654.7 L591.0 653.1 L599.5 656.1 L606.6 653.3 L613.7 651.6 L622.4 645.5 L629.3 650.5 L634.8 650.7 L640.8 655.9 L646.3 645.3 L652.0 638.7 L659.9 638.6 L669.1 643.8 L674.2 640.5 L684.0 649.5 L693.6 633.4 L699.2 628.0 L707.7 645.0 L713.2 625.7 L720.7 624.3 L727.7 626.4 L737.5 618.7 L746.2 613.1 L754.0 618.8 L759.2 634.5 L767.5 624.2 L777.3 624.4 L782.8 614.4 L788.9 635.2 L798.5 631.4 L807.6 622.4 L813.0 638.7 L822.0 641.0 L830.8 621.8 L838.8 606.0 L848.5 630.6 L854.6 627.6 L860.8 619.4 L869.0 613.8 L876.3 637.0 L885.8 637.4 L895.0 618.3 L903.0 626.9 L912.7 607.7 L921.5 626.7 L929.2 625.0 L937.1 637.2 L944.3 636.6 L951.0 645.3 L959.0 646.5 L965.7 647.5 L973.0 651.0 L982.1 619.8 L989.4 623.3 L995.6 620.4 L1000.9 646.2 L1006.7 648.7 L1015.3 626.4 L1021.8 641.7 L1028.9 618.8 L1036.2 631.0 L1041.2 634.5 L1047.0 632.1 L1055.9 641.1 L1062.2 643.6 L1069.3 628.5 L1077.0 623.3 L1084.5 644.0 L1093.5 625.3 L1098.8 637.2 L1104.0 632.8 L1112.0 647.1 L1120.5 645.3 L1128.2 632.4 L1135.5 649.4 L1140.6 643.6 L1146.6 632.6 L1154.0 618.3 L1159.7 635.1 L1169.5 619.8 L1175.8 633.0 L1182.9 622.4 L1191.3 637.2 L1198.2 638.4 L1205.1 631.4 L1211.6 621.5 L1220.8 616.2 L1228.4 642.0 L1236.3 628.0 L1244.0 645.7 L1251.5 642.7 L1257.8 627.9 L1267.6 625.4 L1276.2 638.1 L1281.2 649.1 L1289.4 621.7 L1297.2 637.0 L1303.2 613.0 L1308.8 606.3 L1316.6 642.6 L1322.3 644.2 L1331.1 614.4 L1340.8 630.0 L1347.0 648.4 L1356.1 630.9 L1365.0 635.5 L1372.1 624.3 L1379.0 644.4 L1388.5 644.7 L1395.2 630.3 L1401.0 635.7 L1410.9 638.2 L1419.2 624.6 L1426.2 634.6 L1431.4 644.9 L1438.9 639.1 L1446.6 659.1 L1455.1 657.9 L1460.7 665.6 L1468.0 651.6 L1474.1 641.5 L1482.8 648.1 L1489.0 633.0 L1494.1 626.6 L1503.9 652.6 L1512.8 631.2 L1521.4 636.0 L1530.0 658.4 L1538.5 657.1 L1545.6 657.8 L1552.0 650.1 L1557.8 646.3 L1563.0 668.2 L1568.6 669.7 L1576.1 673.5 L1583.3 677.4 L1588.5 678.2 L1595.5 677.6 L1602.8 678.0 L1610.6 679.0 L1619.7 678.1 L1626.2 679.3 L1633.4 679.2 L1640.1 681.1 L1649.6 680.7 L1655.9 680.6 L1665.3 683.7 L1674.8 683.9 L1684.3 685.5 L1690.9 685.5 L1697.3 687.3 L1706.2 687.5 L1714.4 690.9 L1723.5 692.3 L1730.8 694.3 L1739.1 695.8 L1746.7 695.7 L1755.0 697.5 L1761.5 699.6 L1768.4 697.7 L1776.3 698.4 L1783.2 699.7 L1793.0 700.1 L1801.3 700.1 L1809.9 702.4 L1817.1 703.6 L1824.4 704.6 L1834.0 705.7 L1842.5 705.2 L1849.2 705.7 L1855.3 707.5 L1864.7 707.8 L1869.0 707.6" fill="none" stroke="#9d248f" stroke-width="1.9" stroke-linejoin="round"/>
<path d="M54.0 721.3 L63.2 720.2 L71.0 718.5 L79.7 717.3 L89.6 715.9 L99.4 714.2 L107.2 714.1 L117.0 713.7 L124.3 712.5 L133.7 710.0 L143.0 710.3 L152.8 709.1 L161.8 709.3 L171.6 710.1 L177.7 710.7 L187.0 709.1 L196.8 708.4 L206.6 709.2 L212.7 709.9 L219.9 708.3 L226.6 707.8 L234.4 708.2 L244.1 708.4 L250.5 707.6 L259.3 707.5 L269.2 709.0 L277.4 708.9 L284.6 709.7 L291.8 708.0 L300.1 709.3 L310.0 708.3 L317.0 708.3 L323.4 708.6 L330.3 707.9 L339.4 709.2 L347.9 707.9 L357.7 708.3 L365.9 707.8 L375.2 706.8 L381.8 704.6 L389.1 696.4 L395.6 693.1 L402.6 687.5 L411.2 678.0 L419.9 670.8 L429.1 668.5 L436.8 675.2 L445.0 677.4 L453.0 676.6 L460.6 672.3 L469.1 672.3 L476.5 676.2 L484.1 679.7 L492.2 677.0 L502.0 678.8 L509.5 679.9 L517.6 674.6 L524.5 675.4 L532.9 676.9 L540.6 676.0 L549.8 675.6 L556.5 674.0 L565.7 674.3 L573.0 672.5 L579.2 679.4 L585.3 674.5 L592.2 673.3 L601.6 666.0 L611.4 672.2 L618.8 674.4 L628.2 667.3 L635.6 665.6 L644.1 664.9 L653.5 670.9 L663.4 679.6 L671.7 658.8 L678.5 668.9 L686.2 668.7 L692.0 654.9 L699.4 666.2 L704.5 671.0 L711.0 658.3 L718.9 661.9 L724.8 663.6 L734.0 652.7 L743.6 663.7 L752.8 657.3 L760.7 637.0 L768.2 664.9 L778.0 639.5 L787.9 636.8 L795.0 635.7 L801.1 651.6 L810.3 646.1 L819.0 650.1 L824.9 635.3 L833.9 645.0 L843.8 641.5 L849.3 662.8 L858.2 672.1 L864.7 669.8 L870.7 669.1 L879.0 646.4 L884.8 650.7 L893.1 650.4 L902.7 639.1 L909.6 630.9 L915.2 657.9 L924.2 661.9 L931.2 655.1 L937.1 635.0 L945.8 634.5 L954.5 662.6 L959.8 646.6 L965.4 638.1 L975.1 654.3 L983.3 647.8 L991.5 651.0 L997.5 641.6 L1003.6 641.8 L1011.1 652.9 L1016.9 643.7 L1025.5 652.3 L1030.9 648.9 L1039.1 664.3 L1045.1 640.3 L1053.1 659.6 L1058.2 644.4 L1066.5 641.7 L1071.7 662.5 L1080.1 642.0 L1085.5 638.0 L1093.5 653.8 L1103.4 630.9 L1111.4 656.8 L1117.0 642.2 L1126.6 653.7 L1136.2 641.6 L1145.5 664.8 L1152.9 637.7 L1162.3 661.8 L1171.4 662.7 L1179.9 643.7 L1185.2 668.5 L1193.4 664.7 L1201.8 648.2 L1210.7 672.8 L1220.2 658.3 L1226.1 662.9 L1231.9 675.3 L1241.9 662.2 L1250.0 679.7 L1257.7 672.5 L1267.1 665.9 L1276.5 646.4 L1284.8 672.5 L1292.2 657.5 L1301.6 670.5 L1306.8 648.8 L1316.1 643.2 L1324.4 657.7 L1333.8 650.9 L1343.1 664.0 L1351.1 661.0 L1357.6 662.8 L1362.8 663.5 L1369.9 665.2 L1379.5 681.5 L1385.4 676.7 L1392.7 680.9 L1399.4 665.9 L1407.0 669.9 L1412.5 671.9 L1421.3 674.7 L1429.7 665.7 L1436.9 663.6 L1446.3 665.1 L1455.9 652.2 L1465.8 640.8 L1471.3 647.6 L1478.9 658.8 L1487.5 670.1 L1495.6 645.9 L1505.0 645.3 L1514.7 659.0 L1520.1 654.4 L1529.8 663.4 L1537.1 684.3 L1546.6 666.6 L1552.9 684.0 L1560.0 689.6 L1565.1 676.5 L1571.8 689.4 L1581.6 685.7 L1586.6 693.7 L1593.9 693.6 L1601.8 691.2 L1609.6 691.5 L1618.5 692.1 L1624.9 695.2 L1634.5 693.6 L1643.5 695.2 L1649.9 697.6 L1656.1 696.0 L1662.7 695.9 L1669.0 698.2 L1677.0 699.2 L1683.9 701.0 L1690.6 700.7 L1697.3 698.9 L1705.8 699.1 L1713.5 701.9 L1721.6 703.8 L1730.8 703.7 L1739.3 705.1 L1747.0 703.6 L1756.3 706.3 L1765.8 705.2 L1774.4 706.7 L1783.7 709.0 L1791.8 707.5 L1800.7 710.1 L1810.6 711.5 L1818.3 713.7 L1828.2 713.9 L1834.5 714.1 L1844.3 715.3 L1850.4 716.0 L1856.7 717.1 L1866.4 715.5 L1869.0 717.7" fill="none" stroke="#9d248f" stroke-width="1.9" stroke-linejoin="round"/>
<path d="M54.0 719.1 L62.2 718.3 L70.1 717.1 L76.2 717.2 L84.2 718.0 L91.6 718.6 L98.0 717.9 L104.1 716.6 L110.7 718.0 L119.4 717.2 L128.8 717.8 L136.3 717.7 L143.5 717.2 L152.8 716.1 L161.4 716.6 L167.8 716.7 L174.6 715.5 L181.5 715.1 L191.3 715.2 L200.7 714.4 L207.7 713.8 L215.6 715.8 L223.7 715.6 L230.3 713.9 L237.2 715.6 L246.0 716.5 L255.1 715.4 L261.9 716.2 L268.5 716.4 L276.6 716.2 L286.5 716.0 L296.2 716.3 L306.1 717.7 L312.7 718.8 L321.5 718.8 L329.4 719.8 L336.5 719.4 L345.3 720.0 L354.6 720.5 L363.5 721.2 L370.5 720.8 L378.7 714.4 L387.5 709.0 L396.3 698.6 L405.8 696.4 L413.2 692.1 L421.1 680.7 L427.4 678.4 L436.1 672.2 L443.8 671.2 L449.8 680.2 L458.5 693.4 L467.7 700.8 L477.6 698.1 L487.3 700.0 L495.2 700.7 L502.6 699.1 L512.1 699.4 L521.8 696.8 L528.5 695.5 L537.5 692.6 L546.0 694.4 L553.5 688.0 L562.3 688.2 L572.2 684.7 L581.1 688.2 L590.6 690.4 L600.1 691.8 L608.4 691.0 L617.1 685.1 L623.9 676.7 L630.9 681.0 L640.4 674.9 L649.8 684.8 L656.6 684.5 L666.5 688.9 L675.3 675.8 L682.2 673.3 L688.6 673.7 L697.8 680.6 L704.2 680.0 L712.1 663.2 L718.3 662.9 L723.7 675.0 L731.8 667.8 L741.5 666.3 L747.5 666.1 L754.6 657.3 L761.3 671.9 L769.4 655.6 L777.7 668.6 L783.2 661.2 L791.8 677.6 L800.7 665.5 L810.1 670.0 L818.4 662.1 L825.0 654.4 L830.7 674.3 L836.1 677.7 L843.2 665.6 L850.5 683.2 L858.5 672.0 L866.4 674.6 L871.6 662.0 L881.0 681.5 L889.5 692.9 L897.9 684.2 L907.3 664.3 L914.5 682.8 L920.3 683.2 L925.7 661.3 L932.4 680.8 L941.4 676.2 L949.7 673.3 L956.4 665.2 L963.4 692.7 L971.5 680.9 L979.3 684.7 L988.0 682.8 L995.7 674.2 L1004.5 695.8 L1012.4 669.1 L1019.3 683.4 L1025.2 695.2 L1030.8 699.1 L1039.6 686.8 L1047.4 695.3 L1054.8 697.6 L1064.8 666.9 L1074.3 674.0 L1083.6 661.0 L1092.7 670.2 L1101.2 668.3 L1106.7 674.5 L1116.3 667.7 L1122.9 679.2 L1130.2 655.5 L1137.2 656.9 L1146.5 676.1 L1154.6 672.6 L1161.0 670.5 L1169.9 666.7 L1178.3 661.8 L1184.8 689.7 L1191.3 670.5 L1198.8 684.9 L1208.5 668.6 L1218.4 673.7 L1224.3 657.6 L1230.1 665.4 L1237.0 678.1 L1246.2 695.1 L1256.1 690.0 L1264.3 692.3 L1273.9 674.7 L1281.6 661.6 L1290.2 692.7 L1300.0 683.9 L1307.9 692.7 L1314.2 698.2 L1320.9 697.6 L1328.0 689.2 L1337.6 667.6 L1346.4 668.7 L1354.4 672.7 L1362.0 666.6 L1370.5 690.7 L1376.6 690.4 L1386.2 682.7 L1392.6 667.0 L1399.9 694.0 L1409.6 681.2 L1418.1 663.3 L1424.6 689.0 L1434.1 688.1 L1440.4 679.8 L1446.4 662.2 L1454.2 682.7 L1461.3 664.4 L1470.5 688.1 L1477.6 662.7 L1484.2 674.0 L1489.7 690.0 L1494.7 700.8 L1503.2 672.8 L1512.8 678.2 L1519.0 703.7 L1524.4 695.8 L1531.4 691.5 L1538.9 687.4 L1545.7 705.1 L1551.6 710.2 L1558.7 713.8 L1568.0 697.4 L1576.6 697.3 L1585.2 708.5 L1593.9 705.4 L1600.5 713.4 L1607.0 714.9 L1613.4 715.2 L1623.3 719.2 L1631.3 721.2 L1637.9 720.4 L1646.3 723.6 L1654.4 725.4 L1660.9 725.2 L1669.2 725.7 L1678.4 726.7 L1688.3 726.5 L1694.3 727.1 L1702.2 729.8 L1708.8 731.1 L1715.8 730.4 L1724.2 732.8 L1732.2 732.5 L1738.9 734.7 L1748.3 735.5 L1758.2 734.5 L1767.0 737.4 L1774.2 735.6 L1781.0 737.4 L1787.1 739.8 L1796.6 738.5 L1805.9 739.6 L1813.2 740.1 L1820.5 740.8 L1828.9 741.5 L1835.0 740.9 L1845.0 742.9 L1852.8 742.4 L1859.5 745.4 L1868.0 745.3 L1869.0 745.0" fill="none" stroke="#9d248f" stroke-width="1.9" stroke-linejoin="round"/>
<path d="M54.0 730.5 L63.9 730.3 L73.9 732.0 L80.9 731.2 L88.5 730.7 L97.6 731.4 L104.7 730.7 L113.4 730.5 L119.9 729.9 L127.9 730.9 L137.2 730.4 L144.3 730.8 L151.2 729.3 L157.8 729.4 L167.0 729.5 L176.3 729.4 L184.9 728.1 L194.8 729.4 L203.7 729.7 L213.2 729.6 L222.3 729.5 L231.0 727.9 L240.4 728.1 L248.9 729.5 L256.9 728.4 L265.1 729.7 L274.5 730.4 L284.1 730.2 L292.1 728.7 L301.8 728.0 L311.6 729.4 L318.5 728.6 L327.4 728.3 L335.1 728.4 L341.7 728.8 L350.3 728.4 L359.7 729.9 L366.7 730.5 L373.0 727.4 L381.0 724.8 L389.7 712.1 L399.5 704.4 L406.3 703.2 L412.5 702.4 L419.4 703.0 L426.8 703.1 L434.1 704.0 L442.8 704.6 L450.9 704.7 L458.5 703.6 L466.3 706.0 L472.9 704.4 L481.2 704.7 L489.7 702.0 L499.0 699.5 L508.7 699.8 L515.7 699.3 L525.5 701.5 L535.3 703.9 L543.1 702.2 L549.3 701.3 L556.3 696.2 L565.0 695.6 L573.2 693.1 L580.8 697.3 L586.9 689.7 L595.5 687.5 L602.5 684.8 L607.6 687.1 L617.5 696.1 L622.7 701.0 L632.2 699.3 L638.1 686.9 L643.9 692.8 L652.5 683.5 L662.3 691.3 L670.9 685.7 L680.2 687.1 L689.1 696.8 L694.4 676.0 L700.6 694.2 L707.2 683.5 L715.0 685.4 L722.3 693.6 L729.6 694.0 L735.3 693.6 L742.6 685.8 L748.3 695.1 L754.0 694.0 L761.6 668.9 L771.4 687.6 L776.9 672.9 L786.6 679.0 L794.4 679.5 L799.4 667.1 L805.8 665.9 L812.8 675.6 L821.6 664.3 L830.0 670.3 L838.1 675.6 L843.5 691.6 L848.8 699.5 L855.4 674.6 L863.4 690.2 L873.3 676.8 L878.8 700.9 L885.2 695.6 L893.0 708.3 L901.0 705.2 L906.9 703.9 L914.3 702.5 L922.5 678.3 L929.5 690.7 L935.4 682.8 L941.9 686.3 L951.3 705.9 L959.5 700.8 L969.2 706.9 L977.1 676.9 L983.8 678.5 L991.8 684.1 L997.5 695.5 L1004.6 691.6 L1014.0 703.9 L1019.7 695.3 L1028.1 681.3 L1034.8 700.1 L1044.5 701.3 L1051.6 700.1 L1061.1 677.2 L1066.5 691.2 L1076.2 706.6 L1082.3 688.3 L1091.1 685.6 L1096.9 687.7 L1104.9 680.5 L1113.6 689.6 L1120.9 680.1 L1130.7 669.2 L1137.3 678.8 L1144.6 676.3 L1154.1 676.2 L1163.2 686.9 L1171.8 700.8 L1179.0 672.8 L1186.1 664.9 L1191.1 665.1 L1196.7 696.1 L1205.5 679.4 L1210.9 666.7 L1218.0 679.5 L1227.5 680.2 L1235.4 688.3 L1241.4 677.0 L1247.5 679.4 L1255.6 683.7 L1264.9 693.4 L1271.0 685.9 L1280.5 673.3 L1287.5 688.3 L1293.3 704.3 L1303.0 691.8 L1309.9 687.8 L1318.4 678.2 L1325.8 680.0 L1334.3 700.9 L1342.0 711.0 L1347.8 723.2 L1357.1 702.3 L1365.0 708.5 L1374.5 714.9 L1382.0 700.6 L1388.5 710.4 L1393.5 707.2 L1400.2 719.0 L1408.5 701.4 L1415.0 726.5 L1420.2 715.2 L1425.7 709.4 L1435.6 716.2 L1445.1 704.7 L1453.1 720.5 L1459.4 734.2 L1465.1 733.5 L1473.4 713.4 L1481.3 716.9 L1490.9 741.0 L1497.4 745.7 L1504.4 728.0 L1512.2 731.7 L1520.2 741.8 L1526.7 739.3 L1532.2 722.9 L1537.8 708.5 L1547.4 709.7 L1556.9 727.5 L1564.0 728.0 L1571.8 725.1 L1578.5 733.5 L1586.8 727.7 L1593.5 733.3 L1602.9 734.5 L1612.1 738.4 L1620.3 738.3 L1627.3 740.1 L1635.9 737.5 L1644.2 737.0 L1653.3 735.1 L1660.5 734.6 L1669.2 736.1 L1679.1 734.3 L1687.2 735.0 L1697.0 735.4 L1703.8 736.9 L1712.3 740.4 L1719.0 742.4 L1727.8 743.3 L1734.7 747.6 L1742.1 748.6 L1749.0 748.6 L1757.1 753.0 L1764.2 753.7 L1773.3 754.0 L1780.9 753.7 L1789.1 756.4 L1796.1 755.2 L1803.0 754.0 L1810.3 755.1 L1818.7 755.9 L1827.4 754.7 L1834.0 754.7 L1840.5 754.8 L1847.1 757.2 L1855.0 757.9 L1864.1 757.2 L1869.0 757.1" fill="none" stroke="#9d248f" stroke-width="1.9" stroke-linejoin="round"/>
<path d="M54.0 766.1 L61.7 766.2 L69.5 763.7 L78.2 762.0 L86.5 760.3 L95.5 758.1 L102.7 758.8 L109.1 756.9 L115.8 755.4 L124.1 755.2 L133.8 750.5 L142.9 746.3 L149.3 742.9 L156.6 739.7 L166.6 736.0 L173.0 732.7 L180.1 728.5 L189.6 723.6 L198.6 725.2 L204.6 724.0 L213.7 722.9 L221.2 722.9 L230.7 724.1 L239.8 722.9 L246.2 724.0 L253.1 722.5 L259.5 723.4 L267.2 721.9 L273.3 722.1 L279.5 720.9 L287.4 721.8 L295.6 722.7 L301.7 720.7 L308.1 721.2 L316.8 719.8 L325.0 718.6 L331.6 718.5 L338.1 718.1 L345.3 717.9 L354.7 718.1 L364.0 716.2 L373.1 714.4 L382.8 710.7 L391.5 707.8 L397.6 703.6 L404.3 700.9 L413.3 699.5 L419.9 701.6 L427.0 694.4 L434.5 693.3 L442.7 696.0 L451.8 697.4 L459.7 695.9 L468.4 700.3 L478.0 701.8 L487.5 697.4 L494.8 699.6 L503.4 705.9 L511.9 703.0 L520.2 701.2 L528.4 699.0 L537.6 706.6 L544.4 705.6 L550.6 700.2 L559.0 698.2 L566.7 701.1 L575.8 705.6 L583.7 698.6 L591.0 697.8 L599.1 698.9 L606.3 700.1 L613.3 693.0 L622.7 695.6 L628.6 697.5 L637.5 696.0 L642.8 701.1 L651.8 701.4 L659.0 690.9 L664.3 697.4 L670.0 706.3 L676.8 697.0 L682.5 694.9 L690.0 699.1 L699.8 682.0 L709.2 675.7 L716.7 690.6 L723.7 676.3 L730.9 670.0 L737.6 669.0 L745.6 671.4 L751.1 655.7 L757.6 654.5 L764.7 658.5 L774.7 665.4 L784.2 646.5 L791.1 654.3 L796.5 661.4 L804.3 640.0 L813.5 650.8 L821.6 654.3 L828.6 630.1 L834.5 654.0 L841.5 659.3 L851.0 659.7 L857.9 654.9 L865.2 634.9 L872.9 643.9 L878.7 619.0 L886.9 642.8 L896.5 638.7 L902.0 632.6 L907.8 611.5 L915.6 616.8 L922.3 614.3 L930.4 619.2 L937.6 617.1 L943.6 628.2 L952.4 647.3 L961.0 620.2 L969.9 639.6 L978.1 628.9 L987.0 633.1 L994.7 618.8 L1003.9 619.1 L1010.5 647.6 L1020.0 654.9 L1029.2 661.3 L1034.5 638.8 L1040.2 622.2 L1050.1 640.2 L1058.3 623.4 L1065.7 632.3 L1075.7 637.2 L1081.7 648.9 L1088.9 636.4 L1097.2 647.7 L1105.2 655.8 L1113.9 662.7 L1123.0 634.6 L1128.1 635.7 L1135.9 626.0 L1141.1 632.3 L1150.8 654.0 L1158.4 634.5 L1166.3 665.8 L1171.8 658.2 L1177.5 665.2 L1183.5 638.4 L1189.7 655.0 L1195.6 659.3 L1204.9 639.3 L1214.4 660.8 L1223.6 666.0 L1231.1 661.4 L1237.5 656.9 L1244.0 644.7 L1249.7 663.1 L1259.4 681.2 L1265.0 656.4 L1270.2 682.6 L1277.7 668.0 L1287.0 685.3 L1295.7 700.1 L1303.0 691.1 L1308.0 681.0 L1313.4 666.6 L1323.3 687.0 L1332.2 693.9 L1341.7 690.9 L1350.1 713.0 L1358.1 700.7 L1364.4 699.4 L1372.1 706.8 L1377.2 710.7 L1383.8 711.4 L1390.8 712.1 L1397.8 724.8 L1404.2 721.3 L1410.6 721.0 L1416.1 723.8 L1423.9 716.8 L1433.4 712.3 L1442.5 698.8 L1451.1 728.0 L1457.5 705.3 L1465.4 708.9 L1471.6 724.7 L1478.8 713.5 L1487.7 727.0 L1495.1 713.2 L1501.2 709.5 L1510.4 712.3 L1518.2 739.1 L1527.8 734.3 L1533.0 748.7 L1538.5 752.5 L1543.9 759.1 L1553.1 744.8 L1562.1 759.0 L1567.5 766.3 L1575.4 759.2 L1584.8 763.6 L1590.1 766.4 L1596.1 765.4 L1603.8 760.7 L1610.9 758.0 L1620.4 760.0 L1628.6 757.3 L1637.7 756.7 L1646.6 758.2 L1654.8 757.9 L1661.2 759.6 L1668.5 758.4 L1676.2 760.7 L1685.3 762.6 L1692.6 763.1 L1701.7 765.1 L1710.2 764.1 L1716.3 764.6 L1724.9 765.9 L1731.1 766.0 L1741.0 766.5 L1749.6 765.2 L1756.8 764.0 L1765.7 765.1 L1775.6 763.7 L1782.4 762.4 L1790.1 763.1 L1796.9 764.4 L1803.9 761.9 L1810.3 761.3 L1818.3 760.0 L1826.0 762.7 L1832.4 762.9 L1840.5 762.9 L1847.2 759.5 L1855.0 760.1 L1863.7 758.2 L1869.0 758.8" fill="none" stroke="#9d248f" stroke-width="1.9" stroke-linejoin="round"/>
<path d="M54.0 776.2 L62.3 779.2 L69.4 780.1 L78.5 783.2 L85.2 785.0 L94.0 787.6 L103.3 789.9 L112.0 789.5 L120.0 787.3 L129.7 786.2 L136.3 785.4 L144.5 786.6 L151.9 786.7 L161.4 784.4 L169.4 784.3 L178.0 784.1 L184.3 783.8 L190.9 782.9 L199.0 781.3 L207.6 781.9 L214.6 782.4 L221.1 782.9 L227.4 782.6 L235.6 780.9 L242.7 782.3 L251.4 781.7 L260.2 780.4 L268.3 781.7 L275.5 780.9 L285.5 781.7 L292.8 781.9 L298.8 780.9 L308.2 780.7 L316.6 779.0 L326.5 778.8 L336.1 779.1 L344.9 777.6 L353.5 776.0 L360.9 777.2 L367.6 774.9 L377.2 772.0 L384.3 769.0 L393.4 757.0 L401.3 747.3 L409.2 745.6 L417.9 747.3 L427.5 749.1 L437.4 756.5 L444.1 757.6 L454.0 757.8 L461.6 759.5 L470.0 759.6 L476.1 756.7 L485.5 756.5 L495.3 754.6 L501.8 754.2 L508.2 748.5 L517.5 748.3 L524.0 741.3 L532.0 737.8 L538.6 739.1 L546.2 737.3 L554.8 734.5 L563.2 733.4 L572.1 739.1 L581.5 735.1 L591.3 739.7 L600.7 738.3 L609.0 725.5 L618.8 717.0 L626.2 715.1 L636.2 717.7 L643.3 716.1 L651.9 700.5 L658.5 700.8 L666.6 690.8 L674.8 695.7 L683.2 693.6 L688.6 695.3 L693.9 690.6 L699.4 701.9 L707.4 688.0 L713.6 682.4 L720.0 693.5 L727.8 679.2 L734.0 686.2 L740.2 693.3 L748.8 683.3 L754.4 691.0 L761.4 682.3 L770.7 686.6 L777.0 689.1 L782.1 661.9 L790.6 671.8 L800.4 654.6 L806.7 651.7 L813.3 644.1 L820.7 674.7 L830.3 659.4 L837.4 650.7 L845.0 670.4 L853.5 648.3 L859.9 653.7 L867.1 675.6 L873.1 679.3 L879.4 680.8 L888.6 659.1 L897.3 686.3 L906.5 682.2 L915.9 677.8 L922.9 691.4 L929.5 676.1 L939.2 666.4 L946.7 684.2 L953.1 666.0 L962.1 688.3 L970.4 680.6 L978.7 688.5 L988.3 706.0 L997.9 690.7 L1003.2 695.2 L1012.4 691.3 L1021.1 707.4 L1027.2 687.3 L1036.6 682.5 L1043.0 682.8 L1050.9 702.2 L1059.9 681.6 L1069.1 701.3 L1075.9 695.4 L1082.4 714.0 L1091.7 704.1 L1101.1 685.0 L1106.5 689.5 L1113.4 691.1 L1121.0 705.6 L1128.0 713.7 L1136.9 715.3 L1143.2 716.0 L1151.9 691.5 L1160.5 697.3 L1167.8 684.6 L1173.4 680.0 L1183.3 705.4 L1190.4 686.9 L1198.3 692.4 L1206.6 675.1 L1214.3 697.2 L1222.6 687.4 L1228.9 701.3 L1235.3 705.4 L1244.6 705.2 L1251.0 684.8 L1258.8 704.4 L1266.3 691.7 L1275.6 679.8 L1283.7 682.3 L1292.3 681.2 L1298.2 691.2 L1306.1 690.8 L1315.7 691.8 L1325.4 688.0 L1333.0 672.1 L1338.5 681.8 L1347.8 696.4 L1357.6 704.5 L1363.0 681.8 L1371.4 699.7 L1377.5 682.8 L1384.8 704.7 L1393.7 707.4 L1402.3 699.2 L1410.6 684.8 L1415.6 690.1 L1424.9 713.0 L1433.2 702.9 L1438.3 699.4 L1446.7 711.9 L1451.8 695.2 L1457.7 718.0 L1462.7 705.6 L1471.8 712.8 L1478.2 715.1 L1486.0 702.5 L1491.9 720.6 L1501.4 733.8 L1509.5 707.8 L1517.8 708.4 L1522.9 722.4 L1532.7 711.9 L1540.0 709.7 L1546.2 717.8 L1553.0 738.6 L1562.6 754.3 L1571.2 749.2 L1576.7 742.6 L1584.0 749.7 L1593.0 753.0 L1602.0 750.0 L1608.6 751.2 L1615.7 752.3 L1625.7 752.1 L1632.0 751.3 L1641.5 751.4 L1651.3 753.2 L1657.8 754.1 L1664.1 756.2 L1674.0 757.2 L1681.1 758.3 L1689.3 761.5 L1698.5 764.1 L1707.7 767.0 L1716.4 769.6 L1726.1 772.6 L1735.7 774.7 L1742.4 773.6 L1752.1 774.9 L1759.1 779.3 L1765.7 780.4 L1772.4 781.9 L1779.0 782.9 L1788.1 785.2 L1797.8 789.3 L1804.2 790.1 L1812.5 792.8 L1820.4 791.6 L1827.2 795.4 L1834.9 795.7 L1842.6 794.5 L1849.1 796.4 L1856.4 793.8 L1865.4 796.1 L1869.0 797.0" fill="none" stroke="#9d248f" stroke-width="1.9" stroke-linejoin="round"/>
<path d="M54.0 717.8 L62.1 717.1 L71.2 716.9 L80.0 717.1 L88.7 718.1 L94.9 718.7 L101.1 718.6 L107.4 718.5 L115.7 717.7 L124.3 718.3 L132.0 718.3 L138.3 716.6 L146.7 717.0 L156.0 717.3 L163.1 716.3 L170.7 715.7 L180.2 717.0 L188.4 716.4 L194.4 717.0 L202.5 715.5 L211.7 716.1 L217.9 716.2 L224.7 715.2 L231.8 716.3 L241.2 715.6 L248.7 716.9 L255.5 717.7 L263.5 717.4 L269.7 717.1 L276.5 716.1 L284.5 717.5 L291.0 717.5 L299.0 717.5 L306.0 717.5 L312.2 716.7 L319.3 717.6 L327.8 718.3 L335.0 718.9 L341.7 717.8 L351.2 717.3 L360.4 717.2 L366.8 717.9 L376.2 713.3 L384.4 710.4 L391.8 705.4 L401.1 691.7 L407.4 693.6 L416.9 690.7 L425.1 689.0 L434.3 689.3 L441.9 689.4 L450.7 691.1 L457.1 688.1 L465.3 685.9 L474.4 686.7 L480.7 687.4 L490.5 689.3 L496.9 688.8 L505.1 684.3 L513.0 687.3 L520.0 687.3 L529.8 688.6 L538.0 688.8 L545.7 687.3 L555.1 689.7 L561.9 690.5 L568.1 688.6 L578.0 688.2 L585.9 688.4 L593.2 685.7 L602.2 683.3 L609.3 688.6 L618.0 680.4 L625.6 678.6 L634.8 672.9 L640.5 683.3 L645.8 678.0 L654.9 676.6 L664.6 672.7 L673.5 675.3 L682.9 672.0 L692.6 658.1 L699.7 654.4 L707.5 654.1 L712.8 673.5 L719.6 658.5 L725.7 673.6 L731.6 650.0 L739.6 670.4 L748.8 657.7 L754.1 643.4 L763.2 650.3 L768.3 659.5 L777.4 656.8 L784.9 640.9 L792.8 635.5 L799.2 635.6 L805.0 655.9 L814.9 646.1 L824.7 623.7 L830.2 651.0 L835.4 657.6 L842.7 658.5 L848.6 642.1 L855.0 644.0 L864.8 646.4 L874.7 637.6 L881.9 625.6 L889.2 642.9 L896.5 616.7 L902.5 631.2 L911.8 637.2 L918.0 629.0 L927.0 644.9 L935.6 643.0 L944.2 629.3 L951.7 612.2 L956.9 612.3 L965.1 609.6 L974.3 635.8 L983.6 647.6 L991.9 651.0 L1001.8 625.6 L1010.2 629.8 L1015.3 639.4 L1024.7 646.7 L1031.0 620.3 L1037.7 617.7 L1043.5 639.1 L1050.4 643.8 L1057.8 619.0 L1063.3 626.2 L1071.0 614.1 L1078.3 624.8 L1087.2 611.9 L1096.5 622.9 L1104.6 634.3 L1113.8 615.9 L1123.6 623.9 L1131.8 611.7 L1140.1 619.6 L1149.1 630.9 L1157.6 632.2 L1166.4 625.6 L1171.9 627.7 L1181.2 645.3 L1187.8 648.6 L1196.3 635.0 L1201.7 643.1 L1210.1 641.4 L1215.7 643.3 L1221.6 651.7 L1226.7 649.3 L1232.7 641.0 L1237.8 651.8 L1247.2 646.1 L1254.2 637.7 L1264.0 637.6 L1272.4 668.0 L1279.1 651.3 L1287.7 650.5 L1296.7 653.0 L1304.1 651.6 L1310.7 666.7 L1318.3 666.3 L1326.6 649.5 L1336.3 664.9 L1344.4 649.9 L1352.5 668.4 L1360.7 650.3 L1368.3 675.2 L1375.2 655.9 L1380.8 648.5 L1389.5 665.1 L1395.9 677.2 L1402.2 662.4 L1407.7 668.2 L1417.4 668.2 L1423.7 661.5 L1432.9 679.3 L1438.4 686.8 L1445.7 658.1 L1455.1 647.7 L1462.8 652.1 L1472.5 671.4 L1481.8 677.5 L1488.6 661.1 L1494.0 656.7 L1501.7 663.5 L1510.6 678.4 L1520.3 690.6 L1529.4 671.5 L1538.9 659.7 L1548.0 664.9 L1558.0 685.0 L1563.2 687.6 L1569.5 682.8 L1579.1 690.9 L1584.5 703.6 L1592.2 711.2 L1599.4 714.8 L1609.0 712.9 L1618.6 715.2 L1628.4 717.9 L1636.2 718.3 L1642.3 719.6 L1649.3 721.4 L1656.4 721.4 L1663.8 723.3 L1670.2 722.1 L1677.8 725.4 L1684.0 725.0 L1693.6 727.1 L1702.5 727.2 L1709.8 727.8 L1716.2 728.9 L1726.1 730.8 L1735.9 732.1 L1743.3 731.5 L1753.1 730.8 L1762.5 732.3 L1771.6 735.4 L1779.7 734.5 L1787.7 734.4 L1797.0 736.4 L1803.0 736.7 L1812.1 737.6 L1822.0 739.3 L1829.6 738.4 L1839.6 740.1 L1847.7 740.4 L1855.4 742.7 L1864.2 743.3 L1869.0 744.0" fill="none" stroke="#9d248f" stroke-width="1.9" stroke-linejoin="round"/>
</svg>
<div class="t" style="left:152.5px;top:59.9px;font-size:19px;line-height:19px;color:#333333;font-weight:normal;letter-spacing:-0.229px;">Calendar</div>
<div class="t" style="left:262.8px;top:59.9px;font-size:19px;line-height:19px;color:#333333;font-weight:normal;letter-spacing:-0.85px;">Chain</div>
<div class="t" style="left:344.6px;top:59.9px;font-size:19px;line-height:19px;color:#333333;font-weight:normal;letter-spacing:-0.5px;">Capsule</div>
<div class="t" style="left:474.0px;top:59.9px;font-size:19px;line-height:19px;color:#333333;font-weight:normal;letter-spacing:-0.786px;">One Lane</div>
<div class="t" style="left:587.0px;top:59.9px;font-size:19px;line-height:19px;color:#333333;font-weight:normal;letter-spacing:-1.033px;">One Y-Axis</div>
<div class="t" style="left:707.0px;top:59.9px;font-size:19px;line-height:19px;color:#333333;font-weight:normal;letter-spacing:-0.72px;">Spread</div>
<div class="t" style="left:801.3px;top:59.9px;font-size:19px;line-height:19px;color:#333333;font-weight:normal;letter-spacing:-0.6px;">Labels</div>
<div class="t" style="left:906.5px;top:61.9px;font-size:19px;line-height:19px;color:#333333;font-weight:normal;letter-spacing:0.15px;">Alignment</div>
<div class="t" style="left:1019.6px;top:61.9px;font-size:19px;line-height:19px;color:#333333;font-weight:normal;letter-spacing:0.133px;">Dimming</div>
<div class="t" style="left:1147.6px;top:59.9px;font-size:19px;line-height:19px;color:#a5a5a5;font-weight:normal;letter-spacing:-0.5px;">Zoom</div>
<div class="t" style="left:1222.6px;top:59.9px;font-size:19px;line-height:19px;color:#333333;font-weight:normal;letter-spacing:-0.24px;">Export</div>
<div class="t" style="left:1302.8px;top:59.9px;font-size:19px;line-height:19px;color:#a5a5a5;font-weight:normal;letter-spacing:0.0px;">Annotate</div>
<div class="t" style="left:0;top:122px;width:44px;height:14px;overflow:hidden"><div class="t" style="left:0;width:43px;text-align:right;top:-10.0px;font-size:23px;line-height:23px;color:#4055a8">42</div></div>
<div class="t" style="left:-557px;width:600px;text-align:right;top:180.5px;font-size:23px;line-height:23px;color:#4055a8;font-weight:normal;">28</div>
<div class="t" style="left:-557px;width:600px;text-align:right;top:248.5px;font-size:23px;line-height:23px;color:#4055a8;font-weight:normal;">14</div>
<div class="t" style="left:-557px;width:600px;text-align:right;top:317.5px;font-size:23px;line-height:23px;color:#4055a8;font-weight:normal;">0</div>
<div class="t" style="left:-557px;width:600px;text-align:right;top:346.5px;font-size:23px;line-height:23px;color:#068c45;font-weight:normal;">105</div>
<div class="t" style="left:-557px;width:600px;text-align:right;top:415.0px;font-size:23px;line-height:23px;color:#068c45;font-weight:normal;">95</div>
<div class="t" style="left:-557px;width:600px;text-align:right;top:483.0px;font-size:23px;line-height:23px;color:#068c45;font-weight:normal;">84</div>
<div class="t" style="left:-557px;width:600px;text-align:right;top:552.0px;font-size:23px;line-height:23px;color:#068c45;font-weight:normal;">74</div>
<div class="t" style="left:-557px;width:600px;text-align:right;top:582.5px;font-size:23px;line-height:23px;color:#9d248f;font-weight:normal;">79</div>
<div class="t" style="left:-557px;width:600px;text-align:right;top:650.5px;font-size:23px;line-height:23px;color:#9d248f;font-weight:normal;">76</div>
<div class="t" style="left:-557px;width:600px;text-align:right;top:719.0px;font-size:23px;line-height:23px;color:#9d248f;font-weight:normal;">73</div>
<div class="t" style="left:-557px;width:600px;text-align:right;top:787.5px;font-size:23px;line-height:23px;color:#9d248f;font-weight:normal;">70</div>
<div class="t" style="left:-247.0px;width:600px;text-align:center;top:819.0px;font-size:23px;line-height:23px;color:#7a8591;font-weight:normal;-webkit-text-stroke:0.6px #7a8591;">0.0</div>
<div class="t" style="left:-50.34px;width:600px;text-align:center;top:819.0px;font-size:23px;line-height:23px;color:#7a8591;font-weight:normal;-webkit-text-stroke:0.6px #7a8591;">2h</div>
<div class="t" style="left:146.32px;width:600px;text-align:center;top:819.0px;font-size:23px;line-height:23px;color:#7a8591;font-weight:normal;-webkit-text-stroke:0.6px #7a8591;">4h</div>
<div class="t" style="left:342.98px;width:600px;text-align:center;top:819.0px;font-size:23px;line-height:23px;color:#7a8591;font-weight:normal;-webkit-text-stroke:0.6px #7a8591;">6h</div>
<div class="t" style="left:539.64px;width:600px;text-align:center;top:819.0px;font-size:23px;line-height:23px;color:#7a8591;font-weight:normal;-webkit-text-stroke:0.6px #7a8591;">8h</div>
<div class="t" style="left:736.3px;width:600px;text-align:center;top:819.0px;font-size:23px;line-height:23px;color:#7a8591;font-weight:normal;-webkit-text-stroke:0.6px #7a8591;">10h</div>
<div class="t" style="left:932.96px;width:600px;text-align:center;top:819.0px;font-size:23px;line-height:23px;color:#7a8591;font-weight:normal;-webkit-text-stroke:0.6px #7a8591;">12h</div>
<div class="t" style="left:1129.62px;width:600px;text-align:center;top:819.0px;font-size:23px;line-height:23px;color:#7a8591;font-weight:normal;-webkit-text-stroke:0.6px #7a8591;">14h</div>
<div class="t" style="left:1326.28px;width:600px;text-align:center;top:819.0px;font-size:23px;line-height:23px;color:#7a8591;font-weight:normal;-webkit-text-stroke:0.6px #7a8591;">16h</div>
<div class="t" style="left:1522.94px;width:600px;text-align:center;top:819.0px;font-size:23px;line-height:23px;color:#7a8591;font-weight:normal;-webkit-text-stroke:0.6px #7a8591;">18h</div>
<div class="t" style="left:67.5px;top:859.4px;font-size:22px;line-height:22px;color:#0f7a62;font-weight:normal;letter-spacing:-0.345px;">8/7/2018 11:16 PM <u>PDT</u></div>
<div class="t" style="left:810.0px;top:859.4px;font-size:22px;line-height:22px;color:#0f7a62;font-weight:normal;letter-spacing:0.417px;">1 month</div>
<div class="t" style="left:1655.0px;top:859.4px;font-size:22px;line-height:22px;color:#0f7a62;font-weight:normal;letter-spacing:-0.426px;">9/7/2018 9:16 AM <u>PDT</u></div>
<div class="t" style="left:135.5px;top:948.1px;font-size:20px;line-height:20px;color:#8a8a8a;font-weight:normal;letter-spacing:-0.283px;">Oct '17</div>
<div class="t" style="left:592.0px;top:948.1px;font-size:20px;line-height:20px;color:#8a8a8a;font-weight:normal;letter-spacing:-1.833px;">2018</div>
<div class="t" style="left:1016.0px;top:948.1px;font-size:20px;line-height:20px;color:#8a8a8a;font-weight:normal;letter-spacing:-0.283px;">Apr '18</div>
<div class="t" style="left:1458.0px;top:948.1px;font-size:20px;line-height:20px;color:#8a8a8a;font-weight:normal;letter-spacing:0.133px;">Jul '18</div>
<div class="t" style="left:54.0px;top:995.4px;font-size:22px;line-height:22px;color:#0f7a62;font-weight:normal;letter-spacing:0.271px;">9/7/2017</div>
<div class="t" style="left:930.5px;top:995.4px;font-size:22px;line-height:22px;color:#0f7a62;font-weight:normal;letter-spacing:-0.62px;">1 year</div>
<div class="t" style="left:1776.0px;top:995.4px;font-size:22px;line-height:22px;color:#0f7a62;font-weight:normal;letter-spacing:0.2px;">9/7/2018</div>
<div class="t" style="left:58.0px;top:1039.7px;font-size:24px;line-height:24px;color:#ffffff;font-weight:bold;letter-spacing:-0.983px;">Details</div>
<div class="t" style="left:868.0px;top:1041.8px;font-size:22px;line-height:22px;color:#333333;font-weight:normal;letter-spacing:-1.113px;">Customize</div>
<div class="t" style="left:319.7px;top:1095.7px;font-size:24px;line-height:24px;color:#333333;font-weight:bold;letter-spacing:-0.767px;">Name</div>
<div class="t" style="left:638.0px;top:1095.2px;font-size:24px;line-height:24px;color:#333333;font-weight:bold;letter-spacing:-1.88px;">Assets</div>
<div class="t" style="left:723.5px;top:1095.2px;font-size:24px;line-height:24px;color:#0f7a62;font-weight:bold;letter-spacing:-1.267px;">Lane</div>
<div class="t" style="left:272.7px;top:1144.3px;font-size:23px;line-height:23px;color:#333333;font-weight:normal;letter-spacing:-0.9px;">kW</div>
<div class="t" style="left:790px;top:1143.5px;font-size:24px;line-height:24px;color:#333333;font-weight:normal;">1</div>
<div class="t" style="left:318.5px;top:1143.5px;font-size:24px;line-height:24px;color:#333333;font-weight:bold;letter-spacing:-0.621px;">Compressor Power</div>
<div class="t" style="left:638.0px;top:1143.5px;font-size:24px;line-height:24px;color:#0f7a62;font-weight:normal;letter-spacing:-0.82px;text-decoration-thickness:2px;text-underline-offset:3px;"><u>Area A</u></div>
<div class="t" style="left:272.8px;top:1191.4px;font-size:22px;line-height:22px;color:#333333;font-weight:normal;letter-spacing:-1.6px;">°F</div>
<div class="t" style="left:789px;top:1189.7px;font-size:24px;line-height:24px;color:#333333;font-weight:normal;">2</div>
<div class="t" style="left:318.5px;top:1189.7px;font-size:24px;line-height:24px;color:#333333;font-weight:bold;letter-spacing:-0.621px;">Temperature</div>
<div class="t" style="left:638.0px;top:1189.7px;font-size:24px;line-height:24px;color:#0f7a62;font-weight:normal;letter-spacing:-0.82px;text-decoration-thickness:2px;text-underline-offset:3px;"><u>Area A</u></div>
<div class="t" style="left:272.8px;top:1237.6px;font-size:22px;line-height:22px;color:#333333;font-weight:normal;letter-spacing:-1.6px;">°F</div>
<div class="t" style="left:789px;top:1235.9px;font-size:24px;line-height:24px;color:#333333;font-weight:normal;">3</div>
<div class="t" style="left:318.5px;top:1235.9px;font-size:24px;line-height:24px;color:#333333;font-weight:bold;letter-spacing:-0.621px;">Wet Bulb</div>
<div class="t" style="left:638.0px;top:1235.9px;font-size:24px;line-height:24px;color:#0f7a62;font-weight:normal;letter-spacing:-0.82px;text-decoration-thickness:2px;text-underline-offset:3px;"><u>Area A</u></div>
<div class="t" style="left:318.5px;top:1282.1px;font-size:24px;line-height:24px;color:#333333;font-weight:bold;letter-spacing:-0.621px;">Compressor Profile Search</div>
<div class="t" style="left:638.0px;top:1282.1px;font-size:24px;line-height:24px;color:#0f7a62;font-weight:normal;letter-spacing:-0.82px;text-decoration-thickness:2px;text-underline-offset:3px;"><u>Area A</u></div>
<div class="t" style="left:1055.4px;top:1040.2px;font-size:24px;line-height:24px;color:#ffffff;font-weight:bold;letter-spacing:-1.243px;">Capsules</div>
<div class="t" style="left:1102.6px;top:1103.3px;font-size:24px;line-height:24px;color:#333333;font-weight:bold;letter-spacing:0.075px;">Start</div>
<div class="t" style="left:1434.6px;top:1103.3px;font-size:24px;line-height:24px;color:#0f7a62;font-weight:bold;letter-spacing:0.033px;">Similarity</div>
<div class="t" style="left:1102.2px;top:1152.5px;font-size:23px;line-height:23px;color:#333333;font-weight:normal;letter-spacing:-0.237px;">Aug 23, 2018 6:42 AM</div>
<div class="t" style="left:1434.6px;top:1152.5px;font-size:23px;line-height:23px;color:#333333;font-weight:normal;letter-spacing:0.2px;">100%</div>
<div class="t" style="left:1102.2px;top:1198.5px;font-size:23px;line-height:23px;color:#333333;font-weight:normal;letter-spacing:-0.237px;">Aug 19, 2018 6:42 AM</div>
<div class="t" style="left:1434.6px;top:1198.5px;font-size:23px;line-height:23px;color:#333333;font-weight:normal;letter-spacing:0.2px;">99.77%</div>
<div class="t" style="left:1102.2px;top:1244.5px;font-size:23px;line-height:23px;color:#333333;font-weight:normal;letter-spacing:-0.237px;">Sep 2, 2018 6:42 AM</div>
<div class="t" style="left:1434.6px;top:1244.5px;font-size:23px;line-height:23px;color:#333333;font-weight:normal;letter-spacing:0.2px;">99.68%</div>
<div class="t" style="left:1102.2px;top:1290.5px;font-size:23px;line-height:23px;color:#333333;font-weight:normal;letter-spacing:-0.237px;">Sep 1, 2018 6:44 AM</div>
<div class="t" style="left:1434.6px;top:1290.5px;font-size:23px;line-height:23px;color:#333333;font-weight:normal;letter-spacing:0.2px;">99.63%</div>
<div class="t" style="left:1102.2px;top:1336.5px;font-size:23px;line-height:23px;color:#333333;font-weight:normal;letter-spacing:-0.237px;">Aug 31, 2018 6:42 AM</div>
<div class="t" style="left:1434.6px;top:1336.5px;font-size:23px;line-height:23px;color:#333333;font-weight:normal;letter-spacing:0.2px;">99.43%</div>
<div class="t" style="left:1102.2px;top:1382.5px;font-size:23px;line-height:23px;color:#333333;font-weight:normal;letter-spacing:-0.237px;">Aug 18, 2018 6:44 AM</div>
<div class="t" style="left:1434.6px;top:1382.5px;font-size:23px;line-height:23px;color:#333333;font-weight:normal;letter-spacing:0.2px;">98.08%</div>
</body></html>
